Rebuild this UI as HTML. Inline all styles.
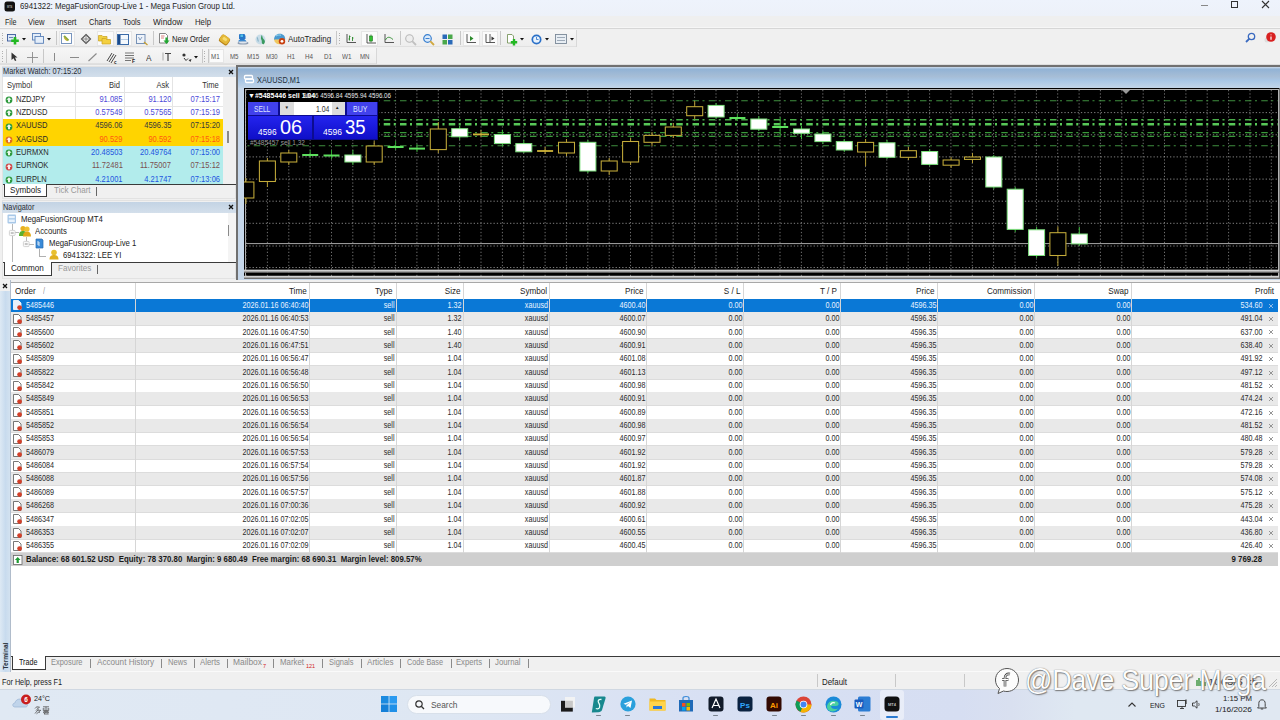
<!DOCTYPE html>
<html><head><meta charset="utf-8"><title>MT4</title><style>
*{margin:0;padding:0;box-sizing:border-box}
html,body{width:1280px;height:720px;overflow:hidden;background:#f0f0f0;font-family:"Liberation Sans",sans-serif;color:#222}
body{position:relative}
.a{position:absolute}
.t{position:absolute;white-space:nowrap;line-height:1}
svg{position:absolute;overflow:visible}
</style></head><body>
<div class="a" style="left:0px;top:0px;width:1280px;height:15.8px;background:linear-gradient(#eef3fc,#edf1f9)"></div>
<svg style="left:4px;top:0.5px;" width="12" height="11" viewBox="0 0 12 11"><rect x="0.5" y="0.5" width="10.5" height="10" rx="2.5" fill="#111"/><text x="5.7" y="6.8" font-size="2.6" fill="#aaa" text-anchor="middle" font-family="Liberation Sans" font-weight="bold">MT4</text></svg>
<div class="t" style="left:19.7px;top:0.9px;font-size:9.5px;color:#1f1f1f;transform:scaleX(0.826);transform-origin:0 0;">6941322: MegaFusionGroup-Live 1 - Mega Fusion Group Ltd.</div>
<div class="a" style="left:1200.8px;top:4.5px;width:7.4px;height:1.1px;background:#888"></div>
<div class="a" style="left:1231.4px;top:0.9px;width:7px;height:7px;border:1.1px solid #333"></div>
<svg style="left:1262px;top:1.2px;" width="7" height="7" viewBox="0 0 7 7"><path d="M0 0L7 7M7 0L0 7" stroke="#333" stroke-width="1.1"/></svg>
<div class="a" style="left:0px;top:15.8px;width:1280px;height:12.2px;background:#efefef"></div>
<div class="t" style="left:4.5px;top:17.5px;font-size:9px;color:#1f1f1f;transform:scaleX(0.793);transform-origin:0 0;">File</div>
<div class="t" style="left:28.2px;top:17.5px;font-size:9px;color:#1f1f1f;transform:scaleX(0.853);transform-origin:0 0;">View</div>
<div class="t" style="left:57.2px;top:17.5px;font-size:9px;color:#1f1f1f;transform:scaleX(0.866);transform-origin:0 0;">Insert</div>
<div class="t" style="left:88.7px;top:17.5px;font-size:9px;color:#1f1f1f;transform:scaleX(0.83);transform-origin:0 0;">Charts</div>
<div class="t" style="left:123.2px;top:17.5px;font-size:9px;color:#1f1f1f;transform:scaleX(0.833);transform-origin:0 0;">Tools</div>
<div class="t" style="left:153.2px;top:17.5px;font-size:9px;color:#1f1f1f;transform:scaleX(0.922);transform-origin:0 0;">Window</div>
<div class="t" style="left:194.7px;top:17.5px;font-size:9px;color:#1f1f1f;transform:scaleX(0.864);transform-origin:0 0;">Help</div>
<div class="a" style="left:0px;top:28px;width:1280px;height:37px;background:#f0f0f0"></div>
<div class="a" style="left:0px;top:26.6px;width:1280px;height:1px;background:#f6f6f6"></div>
<div class="a" style="left:0px;top:28.3px;width:1280px;height:1px;background:#d6d6d6"></div>
<div class="a" style="left:0px;top:29.5px;width:577px;height:17px;background:linear-gradient(#f6f6f6,#eeeeee);border-bottom:1px solid #e0e0e0"></div>
<div class="a" style="left:0px;top:47.5px;width:376px;height:16.5px;background:linear-gradient(#f6f6f6,#eeeeee);border-bottom:1px solid #e0e0e0"></div>
<div class="a" style="left:376px;top:47.5px;width:1px;height:16.5px;background:#d8d8d8"></div>
<div class="a" style="left:576px;top:29.5px;width:1px;height:17px;background:#d8d8d8"></div>
<div class="a" style="left:1.5px;top:32.5px;width:1.2px;height:1.2px;background:#b0b0b0"></div>
<div class="a" style="left:1.5px;top:35.1px;width:1.2px;height:1.2px;background:#b0b0b0"></div>
<div class="a" style="left:1.5px;top:37.7px;width:1.2px;height:1.2px;background:#b0b0b0"></div>
<div class="a" style="left:1.5px;top:40.3px;width:1.2px;height:1.2px;background:#b0b0b0"></div>
<div class="a" style="left:1.5px;top:42.9px;width:1.2px;height:1.2px;background:#b0b0b0"></div>
<div class="a" style="left:1.5px;top:50.5px;width:1.2px;height:1.2px;background:#b0b0b0"></div>
<div class="a" style="left:1.5px;top:53.1px;width:1.2px;height:1.2px;background:#b0b0b0"></div>
<div class="a" style="left:1.5px;top:55.7px;width:1.2px;height:1.2px;background:#b0b0b0"></div>
<div class="a" style="left:1.5px;top:58.3px;width:1.2px;height:1.2px;background:#b0b0b0"></div>
<div class="a" style="left:1.5px;top:60.9px;width:1.2px;height:1.2px;background:#b0b0b0"></div>
<svg style="left:7px;top:33.5px;" width="13" height="11" viewBox="0 0 13 11"><rect x="0.5" y="0.5" width="8" height="6.5" fill="#dde9f7" stroke="#3a5a9a" stroke-width="0.9"/><path d="M2 3.5H6" stroke="#3a5a9a" stroke-width="0.7"/><path d="M8 3V10.5M4.2 6.8H11.8" stroke="#22b822" stroke-width="2.6"/></svg>
<svg style="left:22px;top:38px;" width="4" height="3" viewBox="0 0 4 3"><path d="M0 0H4L2 2.5Z" fill="#111"/></svg>
<svg style="left:32px;top:33.3px;" width="12" height="11" viewBox="0 0 12 11"><rect x="0.5" y="0.5" width="8" height="6.5" fill="#e4eefa" stroke="#5a80b8" stroke-width="0.9"/><rect x="3" y="3.5" width="8.5" height="6.8" fill="#e4eefa" stroke="#5a80b8" stroke-width="0.9"/></svg>
<svg style="left:47px;top:38px;" width="4" height="3" viewBox="0 0 4 3"><path d="M0 0H4L2 2.5Z" fill="#111"/></svg>
<div class="a" style="left:55.5px;top:31px;width:1px;height:14px;background:#c8c8c8"></div>
<div class="a" style="left:58.5px;top:30.5px;width:16.5px;height:15.5px;background:#fbfbfb;border:1px solid #e6e6e6"></div>
<svg style="left:61px;top:33.3px;" width="11" height="11" viewBox="0 0 11 11"><rect x="0.5" y="0.5" width="10" height="10" fill="#fff" stroke="#6a8ab8" stroke-width="0.9"/><path d="M3 3L7.5 7.5" stroke="#8aa83a" stroke-width="2"/><path d="M3.5 5L6 7.5" stroke="#c8b030" stroke-width="1.5"/></svg>
<svg style="left:81px;top:33.5px;" width="10" height="10" viewBox="0 0 10 10"><path d="M5 0.5L9.5 5L5 9.5L0.5 5Z" fill="none" stroke="#555" stroke-width="1.2"/><path d="M5 1V9M1 5H9" stroke="#777" stroke-width="0.8"/></svg>
<div class="a" style="left:96.5px;top:30.5px;width:17.0px;height:15.5px;background:#fbfbfb;border:1px solid #e6e6e6"></div>
<svg style="left:98px;top:33.5px;" width="13" height="11" viewBox="0 0 13 11"><path d="M0.5 1.5H4L5 2.5H9V7H0.5Z" fill="#f0d040" stroke="#c8a020" stroke-width="0.7"/><path d="M4 4.5H7.5L8.5 5.5H12.5V10H4Z" fill="#f4d040" stroke="#c8a020" stroke-width="0.7"/></svg>
<div class="a" style="left:115.5px;top:30.5px;width:16.0px;height:15.5px;background:#fbfbfb;border:1px solid #e6e6e6"></div>
<svg style="left:117px;top:33.5px;" width="12" height="11" viewBox="0 0 12 11"><rect x="0.5" y="0.5" width="11" height="10" fill="#f4f8fc" stroke="#3a6aa8" stroke-width="1"/><rect x="1" y="1" width="2.5" height="9" fill="#1a4a8a"/><path d="M4 5.5H11" stroke="#9ab8d8" stroke-width="0.7"/></svg>
<svg style="left:136px;top:33.5px;" width="12" height="11" viewBox="0 0 12 11"><rect x="0.5" y="0.5" width="8.5" height="9" fill="#eef3fa" stroke="#6a88b0" stroke-width="0.9"/><path d="M2.5 3L4 6L6 3" stroke="#6a88b0" stroke-width="0.8" fill="none"/><path d="M8 8L11.5 11" stroke="#c8a030" stroke-width="1.3"/></svg>
<div class="a" style="left:153.3px;top:31px;width:1px;height:14px;background:#c8c8c8"></div>
<svg style="left:158.5px;top:33.3px;" width="13" height="12" viewBox="0 0 13 12"><path d="M0.5 0.5H6.5L8.5 2.5V10H0.5Z" fill="#fff" stroke="#666" stroke-width="0.8"/><path d="M2 3H5.5M2 5H5" stroke="#d06060" stroke-width="0.8"/><path d="M7.5 4.5V8" stroke="#20a830" stroke-width="2.2"/><path d="M4.5 7.5H10.5L7.5 11Z" fill="#20a830"/></svg>
<div class="t" style="left:172.1px;top:33.8px;font-size:9.5px;color:#1f1f1f;transform:scaleX(0.819);transform-origin:0 0;">New Order</div>
<svg style="left:217.5px;top:33.5px;" width="13" height="12" viewBox="0 0 13 12"><g transform="rotate(35 6.5 6)"><rect x="1.5" y="1.8" width="10" height="8.4" rx="2.2" fill="#b88418"/><rect x="1.8" y="1.8" width="9" height="7.2" rx="2" fill="#e4b838"/><rect x="4" y="3.5" width="4.5" height="3" rx="0.8" fill="#f6dc70"/></g></svg>
<svg style="left:236.5px;top:33.3px;" width="12" height="12" viewBox="0 0 12 12"><path d="M2.5 1H7.5L8.5 3V5.5L7 7.5H3.5L2 5.5V2Z" fill="#2a78c8"/><path d="M3.5 1.5H6V4H3.5Z" fill="#5ad0f0" opacity="0.8"/><path d="M2 7H8.5L9.5 8.5H1Z" fill="#3a88d0"/><ellipse cx="6" cy="10" rx="5.5" ry="1.6" fill="#8a9ab0"/><ellipse cx="6" cy="9.6" rx="4" ry="0.9" fill="#dfe6ee"/></svg>
<svg style="left:255px;top:33.5px;" width="11" height="11" viewBox="0 0 11 11"><circle cx="5.5" cy="5.5" r="5" fill="#c8dce8"/><path d="M6.5 1C8 2 7 4 8.5 5S10.5 8 9 10C7.5 10.8 6.5 9 6.8 7.5C7 6 5.5 5 6 3.5Z" fill="#3a9a60"/><path d="M2 3.5C3 4 2.5 6 3.5 7.5" stroke="#8ab4c8" stroke-width="1.2" fill="none"/></svg>
<svg style="left:273px;top:33px;" width="13" height="12" viewBox="0 0 13 12"><path d="M1 7C1 3 3.5 0.8 6.8 0.8S12.2 3 12.2 6.5Z" fill="#4a9ad0"/><path d="M3 3C4.5 2 6.5 1.8 8 2.2" stroke="#9ad8f0" stroke-width="1" fill="none"/><path d="M1 6.5C1.5 9.5 3.5 11.2 6.5 11.2C8 11.2 9 10.5 9.5 10L12.2 6.5Z" fill="#f0c860"/><circle cx="9" cy="8.3" r="3.2" fill="#c84010"/><circle cx="9" cy="8.3" r="1.4" fill="#fff"/></svg>
<div class="t" style="left:287.7px;top:33.8px;font-size:9.5px;color:#1f1f1f;transform:scaleX(0.841);transform-origin:0 0;">AutoTrading</div>
<div class="a" style="left:335.6px;top:31px;width:1px;height:14px;background:#c8c8c8"></div>
<div class="a" style="left:338.5px;top:32.5px;width:1.2px;height:1.2px;background:#b0b0b0"></div>
<div class="a" style="left:338.5px;top:35.1px;width:1.2px;height:1.2px;background:#b0b0b0"></div>
<div class="a" style="left:338.5px;top:37.7px;width:1.2px;height:1.2px;background:#b0b0b0"></div>
<div class="a" style="left:338.5px;top:40.3px;width:1.2px;height:1.2px;background:#b0b0b0"></div>
<div class="a" style="left:338.5px;top:42.9px;width:1.2px;height:1.2px;background:#b0b0b0"></div>
<svg style="left:346px;top:34px;" width="10" height="9" viewBox="0 0 10 9"><path d="M1 0V8.5H10" stroke="#444" stroke-width="0.9" fill="none"/><path d="M3.5 1.5V6.5M3 2.5H4.5M3.5 5H2.5M6.5 3V7M6 4H7.5" stroke="#2a8a2a" stroke-width="0.9"/></svg>
<div class="a" style="left:361.3px;top:30.5px;width:16.399999999999977px;height:15.5px;background:#fbfbfb;border:1px solid #e6e6e6"></div>
<svg style="left:365.5px;top:33.5px;" width="10" height="10" viewBox="0 0 10 10"><path d="M1 0V9H10" stroke="#444" stroke-width="0.9" fill="none"/><rect x="3.5" y="2" width="3" height="5" fill="#30c030" stroke="#207020" stroke-width="0.6"/><path d="M5 0.5V2M5 7V8.5" stroke="#207020" stroke-width="0.7"/></svg>
<svg style="left:383.5px;top:34px;" width="10" height="9" viewBox="0 0 10 9"><path d="M1 0V8.5H10" stroke="#444" stroke-width="0.9" fill="none"/><path d="M1.5 6C3 3 5 2 9 5.5" stroke="#2a8a2a" stroke-width="0.9" fill="none"/></svg>
<div class="a" style="left:399.6px;top:31px;width:1px;height:14px;background:#c8c8c8"></div>
<svg style="left:405px;top:33.5px;" width="12" height="12" viewBox="0 0 12 12"><circle cx="4.5" cy="4.5" r="3.8" fill="#eee" stroke="#b8b8b8" stroke-width="1.1"/><path d="M7.2 7.2L11 11" stroke="#c0c0c0" stroke-width="1.8"/></svg>
<svg style="left:423px;top:33.5px;" width="12" height="12" viewBox="0 0 12 12"><circle cx="4.5" cy="4.5" r="3.8" fill="#dbeafa" stroke="#3a80d0" stroke-width="1.2"/><path d="M2.5 4.5H6.5" stroke="#3a80d0" stroke-width="1"/><path d="M7.2 7.2L11 11" stroke="#d0a840" stroke-width="1.8"/></svg>
<svg style="left:442px;top:33.5px;" width="11" height="11" viewBox="0 0 11 11"><rect x="0.5" y="0.5" width="4.5" height="4.5" fill="#2a6ab8"/><rect x="6" y="0.5" width="4.5" height="4.5" fill="#4aa84a"/><rect x="0.5" y="6" width="4.5" height="4.5" fill="#4aa84a"/><rect x="6" y="6" width="4.5" height="4.5" fill="#2a6ab8"/></svg>
<div class="a" style="left:460px;top:31px;width:1px;height:14px;background:#c8c8c8"></div>
<div class="a" style="left:463px;top:30.5px;width:16.5px;height:15.5px;background:#fbfbfb;border:1px solid #e6e6e6"></div>
<svg style="left:466px;top:34px;" width="10" height="9" viewBox="0 0 10 9"><path d="M1 0V8.5H10" stroke="#444" stroke-width="0.9" fill="none"/><path d="M4 2V7L7.5 4.5Z" fill="#2a8a2a"/></svg>
<div class="a" style="left:482px;top:30.5px;width:15.5px;height:15.5px;background:#fbfbfb;border:1px solid #e6e6e6"></div>
<svg style="left:485px;top:34px;" width="10" height="9" viewBox="0 0 10 9"><path d="M1 0V8.5H10M5 0V8.5" stroke="#444" stroke-width="0.9" fill="none"/><path d="M6.5 2.5V6.5L9.5 4.5Z" fill="#333"/></svg>
<div class="a" style="left:500px;top:31px;width:1px;height:14px;background:#c8c8c8"></div>
<svg style="left:507px;top:33.5px;" width="11" height="12" viewBox="0 0 11 12"><path d="M0.5 0.5H5L6.5 2V9H0.5Z" fill="#fff" stroke="#6a8a4a" stroke-width="0.8"/><path d="M7 5V11.5M3.8 8.3H10.2" stroke="#22b822" stroke-width="2.4"/></svg>
<svg style="left:520px;top:38px;" width="4" height="3" viewBox="0 0 4 3"><path d="M0 0H4L2 2.5Z" fill="#111"/></svg>
<svg style="left:531px;top:33.5px;" width="11" height="11" viewBox="0 0 11 11"><circle cx="5.5" cy="5.5" r="5" fill="#2a70c8"/><circle cx="5.5" cy="5.5" r="3.3" fill="#e8f2fc"/><path d="M5.5 3V5.5H7.5" stroke="#2a70c8" stroke-width="0.8" fill="none"/></svg>
<svg style="left:545px;top:38px;" width="4" height="3" viewBox="0 0 4 3"><path d="M0 0H4L2 2.5Z" fill="#111"/></svg>
<svg style="left:555px;top:34px;" width="12" height="10" viewBox="0 0 12 10"><rect x="0.5" y="0.5" width="11" height="9" fill="#e8eef4" stroke="#7a8898" stroke-width="0.9"/><path d="M2 3.5H10M2 6.5H10" stroke="#8a98a8" stroke-width="0.8"/></svg>
<svg style="left:570px;top:38px;" width="4" height="3" viewBox="0 0 4 3"><path d="M0 0H4L2 2.5Z" fill="#111"/></svg>
<svg style="left:1245px;top:32px;" width="11" height="11" viewBox="0 0 11 11"><circle cx="6.5" cy="4.5" r="3.2" fill="none" stroke="#3a6ac0" stroke-width="1.3"/><path d="M4.2 6.8L1 10" stroke="#3a6ac0" stroke-width="1.8"/></svg>
<svg style="left:1263px;top:31px;" width="13" height="13" viewBox="0 0 13 13"><circle cx="4" cy="9" r="2.5" fill="#ddd"/><circle cx="8" cy="6" r="4.8" fill="#d82020"/><path d="M8 3.5V4.3M8 5.5V8.8" stroke="#fff" stroke-width="1.2"/></svg>
<div class="a" style="left:5.5px;top:49px;width:1px;height:14px;background:#c8c8c8"></div>
<svg style="left:10.5px;top:52.3px;" width="6" height="9" viewBox="0 0 6 9"><path d="M0.5 0.5V8L2.5 6.2L4 9L5.3 8.4L4 5.6H6.5Z" fill="#333"/></svg>
<svg style="left:26.5px;top:51.5px;" width="11" height="11" viewBox="0 0 11 11"><path d="M5.5 0V11M0 5.5H11" stroke="#8a8a8a" stroke-width="0.9"/></svg>
<div class="a" style="left:43.4px;top:49px;width:1px;height:14px;background:#c8c8c8"></div>
<div class="a" style="left:54.3px;top:52.8px;width:1.1px;height:8px;background:#8a8a8a"></div>
<div class="a" style="left:69.5px;top:56.5px;width:9.5px;height:1.1px;background:#8a8a8a"></div>
<svg style="left:88px;top:52.8px;" width="9" height="8.5" viewBox="0 0 9 8.5"><path d="M0.5 8L8.5 0.5" stroke="#8a8a8a" stroke-width="1.1"/></svg>
<svg style="left:105.5px;top:51.5px;" width="11" height="12" viewBox="0 0 11 12"><path d="M1 9L6 1M3 10L8 2M5 11L10 3" stroke="#333" stroke-width="0.9"/><text x="8" y="11.5" font-size="4.5" fill="#222" font-family="Liberation Sans" font-weight="bold">c</text></svg>
<svg style="left:123.5px;top:52px;" width="12" height="11" viewBox="0 0 12 11"><path d="M1 1H10M1 3.5H10M1 6H10M1 8.5H7" stroke="#555" stroke-width="0.8"/><text x="8" y="11" font-size="5" fill="#222" font-family="Liberation Sans" font-weight="bold">F</text></svg>
<div class="t" style="left:145.7px;top:53.5px;font-size:8.5px;color:#333;transform:scaleX(0.97);transform-origin:0 0;">A</div>
<svg style="left:162px;top:52px;" width="10" height="10" viewBox="0 0 10 10"><path d="M1 0.5V8.5" stroke="#aaa" stroke-width="1"/><path d="M3 1.5H9M6 1.5V9" stroke="#444" stroke-width="1.2"/></svg>
<svg style="left:181.5px;top:52.5px;" width="10" height="9" viewBox="0 0 10 9"><circle cx="2" cy="2" r="1.6" fill="#333"/><path d="M2 5L4 7.5L6 5.5" stroke="#333" stroke-width="1" fill="none"/><path d="M6.5 7L9.5 6L8.5 9Z" fill="#333"/></svg>
<svg style="left:194px;top:56px;" width="4" height="3" viewBox="0 0 4 3"><path d="M0 0H4L2 2.5Z" fill="#111"/></svg>
<div class="a" style="left:201.6px;top:49px;width:1px;height:14px;background:#c8c8c8"></div>
<div class="a" style="left:204px;top:50.5px;width:1.2px;height:1.2px;background:#b0b0b0"></div>
<div class="a" style="left:204px;top:53.1px;width:1.2px;height:1.2px;background:#b0b0b0"></div>
<div class="a" style="left:204px;top:55.7px;width:1.2px;height:1.2px;background:#b0b0b0"></div>
<div class="a" style="left:204px;top:58.3px;width:1.2px;height:1.2px;background:#b0b0b0"></div>
<div class="a" style="left:204px;top:60.9px;width:1.2px;height:1.2px;background:#b0b0b0"></div>
<div class="a" style="left:208.2px;top:49px;width:1px;height:14px;background:#c8c8c8"></div>
<div class="a" style="left:209.4px;top:48.8px;width:14.599999999999994px;height:14.700000000000003px;background:#fbfbfb;border:1px solid #e6e6e6"></div>
<div class="t" style="left:211.39999999999998px;top:53.2px;font-size:8px;color:#555;transform:scaleX(0.774);transform-origin:0 0;">M1</div>
<div class="t" style="left:230.2px;top:53.2px;font-size:8px;color:#555;transform:scaleX(0.765);transform-origin:0 0;">M5</div>
<div class="t" style="left:247.39999999999998px;top:53.2px;font-size:8px;color:#555;transform:scaleX(0.777);transform-origin:0 0;">M15</div>
<div class="t" style="left:266.2px;top:53.2px;font-size:8px;color:#555;transform:scaleX(0.739);transform-origin:0 0;">M30</div>
<div class="t" style="left:286.7px;top:53.2px;font-size:8px;color:#555;transform:scaleX(0.782);transform-origin:0 0;">H1</div>
<div class="t" style="left:304.7px;top:53.2px;font-size:8px;color:#555;transform:scaleX(0.782);transform-origin:0 0;">H4</div>
<div class="t" style="left:323.7px;top:53.2px;font-size:8px;color:#555;transform:scaleX(0.782);transform-origin:0 0;">D1</div>
<div class="t" style="left:342.2px;top:53.2px;font-size:8px;color:#555;transform:scaleX(0.792);transform-origin:0 0;">W1</div>
<div class="t" style="left:360.2px;top:53.2px;font-size:8px;color:#555;transform:scaleX(0.764);transform-origin:0 0;">MN</div>
<div class="a" style="left:0px;top:64px;width:1280px;height:1px;background:#dedede"></div>
<div class="a" style="left:0px;top:65px;width:237px;height:215px;background:#f0f0f0"></div>
<div class="a" style="left:236px;top:65px;width:1px;height:215px;background:#9a9a9a"></div>
<div class="a" style="left:1.5px;top:65.5px;width:234px;height:133px;background:#f0f0f0;border:1px solid #e2e2e2"></div>
<div class="a" style="left:2px;top:66.5px;width:234px;height:10px;background:linear-gradient(#c3d3e4,#d3dfeb)"></div>
<div class="t" style="left:3.3000000000000003px;top:67.4px;font-size:9px;color:#2a2e34;transform:scaleX(0.824);transform-origin:0 0;">Market Watch: 07:15:20</div>
<svg style="left:228.5px;top:69.5px;" width="4" height="4" viewBox="0 0 4 4"><path d="M0 0L4 4M4 0L0 4" stroke="#111" stroke-width="1.3"/></svg>
<div class="a" style="left:2.5px;top:76.5px;width:220.5px;height:107.5px;background:#fff"></div>
<div class="a" style="left:223px;top:76.5px;width:12.5px;height:107.5px;background:#f0f0f0"></div>
<div class="a" style="left:227.3px;top:131px;width:2px;height:11.5px;background:#8a8a8a"></div>
<div class="a" style="left:2.5px;top:92px;width:220.5px;height:0.8px;background:#e0e0e0"></div>
<div class="a" style="left:74.8px;top:76.5px;width:0.8px;height:107.5px;background:#e4e4e4"></div>
<div class="a" style="left:123.6px;top:76.5px;width:0.8px;height:107.5px;background:#e4e4e4"></div>
<div class="a" style="left:172.3px;top:76.5px;width:0.8px;height:107.5px;background:#e4e4e4"></div>
<div class="t" style="left:6.8px;top:80.8px;font-size:9px;color:#333;transform:scaleX(0.84);transform-origin:0 0;">Symbol</div>
<div class="t" style="right:1159.5px;top:80.8px;font-size:9px;color:#333;transform:scaleX(0.84);transform-origin:100% 0;">Bid</div>
<div class="t" style="right:1110.5px;top:80.8px;font-size:9px;color:#333;transform:scaleX(0.84);transform-origin:100% 0;">Ask</div>
<div class="t" style="right:1061.5px;top:80.8px;font-size:9px;color:#333;transform:scaleX(0.84);transform-origin:100% 0;">Time</div>
<div class="a" style="left:2.5px;top:105.5px;width:220.5px;height:0.7px;background:#e6e6e6"></div>
<svg style="left:5.2px;top:96.0px;" width="8" height="8" viewBox="0 0 8 8"><circle cx="4" cy="4" r="3.4" fill="#2e9a3e"/><path d="M4 1.2L6.6 3.8H5V6.3H3V3.8H1.4Z" fill="#fff" opacity="0.9"/></svg>
<div class="t" style="left:16px;top:94.8px;font-size:9px;color:#2a2a2a;transform:scaleX(0.84);transform-origin:0 0;">NZDJPY</div>
<div class="t" style="right:1157.6px;top:94.8px;font-size:9px;color:#4d4ad8;transform:scaleX(0.84);transform-origin:100% 0;">91.085</div>
<div class="t" style="right:1108.8px;top:94.8px;font-size:9px;color:#4d4ad8;transform:scaleX(0.84);transform-origin:100% 0;">91.120</div>
<div class="t" style="right:1059.5px;top:94.8px;font-size:9px;color:#4d4ad8;transform:scaleX(0.84);transform-origin:100% 0;">07:15:17</div>
<div class="a" style="left:2.5px;top:118.8px;width:220.5px;height:0.7px;background:#e6e6e6"></div>
<svg style="left:5.2px;top:109.3px;" width="8" height="8" viewBox="0 0 8 8"><circle cx="4" cy="4" r="3.4" fill="#2e9a3e"/><path d="M4 1.2L6.6 3.8H5V6.3H3V3.8H1.4Z" fill="#fff" opacity="0.9"/></svg>
<div class="t" style="left:16px;top:108.1px;font-size:9px;color:#2a2a2a;transform:scaleX(0.84);transform-origin:0 0;">NZDUSD</div>
<div class="t" style="right:1157.6px;top:108.1px;font-size:9px;color:#4d4ad8;transform:scaleX(0.84);transform-origin:100% 0;">0.57549</div>
<div class="t" style="right:1108.8px;top:108.1px;font-size:9px;color:#4d4ad8;transform:scaleX(0.84);transform-origin:100% 0;">0.57565</div>
<div class="t" style="right:1059.5px;top:108.1px;font-size:9px;color:#4d4ad8;transform:scaleX(0.84);transform-origin:100% 0;">07:15:19</div>
<div class="a" style="left:2.5px;top:119.4px;width:220.5px;height:13.3px;background:#ffd400"></div>
<svg style="left:5.2px;top:122.60000000000001px;" width="8" height="8" viewBox="0 0 8 8"><circle cx="4" cy="4" r="3.4" fill="#2e9a3e"/><path d="M4 1.2L6.6 3.8H5V6.3H3V3.8H1.4Z" fill="#fff" opacity="0.9"/></svg>
<div class="t" style="left:16px;top:121.4px;font-size:9px;color:#2a2a2a;transform:scaleX(0.84);transform-origin:0 0;">XAUUSD</div>
<div class="t" style="right:1157.6px;top:121.4px;font-size:9px;color:#3a3a3a;transform:scaleX(0.84);transform-origin:100% 0;">4596.06</div>
<div class="t" style="right:1108.8px;top:121.4px;font-size:9px;color:#3a3a3a;transform:scaleX(0.84);transform-origin:100% 0;">4596.35</div>
<div class="t" style="right:1059.5px;top:121.4px;font-size:9px;color:#3a3a3a;transform:scaleX(0.84);transform-origin:100% 0;">07:15:20</div>
<div class="a" style="left:2.5px;top:132.7px;width:220.5px;height:13.3px;background:#ffd400"></div>
<svg style="left:5.2px;top:135.89999999999998px;" width="8" height="8" viewBox="0 0 8 8"><circle cx="4" cy="4" r="3.4" fill="#e06a20"/><path d="M4 1.2L6.6 3.8H5V6.3H3V3.8H1.4Z" fill="#fff" opacity="0.9"/></svg>
<div class="t" style="left:16px;top:134.7px;font-size:9px;color:#2a2a2a;transform:scaleX(0.84);transform-origin:0 0;">XAGUSD</div>
<div class="t" style="right:1157.6px;top:134.7px;font-size:9px;color:#ff5a10;transform:scaleX(0.84);transform-origin:100% 0;">90.529</div>
<div class="t" style="right:1108.8px;top:134.7px;font-size:9px;color:#ff5a10;transform:scaleX(0.84);transform-origin:100% 0;">90.592</div>
<div class="t" style="right:1059.5px;top:134.7px;font-size:9px;color:#ff5a10;transform:scaleX(0.84);transform-origin:100% 0;">07:15:18</div>
<div class="a" style="left:2.5px;top:146.0px;width:220.5px;height:13.3px;background:#b2ecec"></div>
<svg style="left:5.2px;top:149.2px;" width="8" height="8" viewBox="0 0 8 8"><circle cx="4" cy="4" r="3.4" fill="#2e9a3e"/><path d="M4 1.2L6.6 3.8H5V6.3H3V3.8H1.4Z" fill="#fff" opacity="0.9"/></svg>
<div class="t" style="left:16px;top:148.0px;font-size:9px;color:#2a2a2a;transform:scaleX(0.84);transform-origin:0 0;">EURMXN</div>
<div class="t" style="right:1157.6px;top:148.0px;font-size:9px;color:#1f55e0;transform:scaleX(0.84);transform-origin:100% 0;">20.48503</div>
<div class="t" style="right:1108.8px;top:148.0px;font-size:9px;color:#1f55e0;transform:scaleX(0.84);transform-origin:100% 0;">20.49764</div>
<div class="t" style="right:1059.5px;top:148.0px;font-size:9px;color:#1f55e0;transform:scaleX(0.84);transform-origin:100% 0;">07:15:00</div>
<div class="a" style="left:2.5px;top:159.3px;width:220.5px;height:13.3px;background:#b2ecec"></div>
<svg style="left:5.2px;top:162.5px;" width="8" height="8" viewBox="0 0 8 8"><circle cx="4" cy="4" r="3.4" fill="#d04848"/><path d="M4 1.2L6.6 3.8H5V6.3H3V3.8H1.4Z" fill="#fff" opacity="0.9"/></svg>
<div class="t" style="left:16px;top:161.3px;font-size:9px;color:#2a2a2a;transform:scaleX(0.84);transform-origin:0 0;">EURNOK</div>
<div class="t" style="right:1157.6px;top:161.3px;font-size:9px;color:#7a5050;transform:scaleX(0.84);transform-origin:100% 0;">11.72481</div>
<div class="t" style="right:1108.8px;top:161.3px;font-size:9px;color:#7a5050;transform:scaleX(0.84);transform-origin:100% 0;">11.75007</div>
<div class="t" style="right:1059.5px;top:161.3px;font-size:9px;color:#7a5050;transform:scaleX(0.84);transform-origin:100% 0;">07:15:12</div>
<div class="a" style="left:2.5px;top:172.60000000000002px;width:220.5px;height:11.399999999999977px;background:#b2ecec"></div>
<svg style="left:5.2px;top:175.8px;" width="8" height="8" viewBox="0 0 8 8"><circle cx="4" cy="4" r="3.4" fill="#2e9a3e"/><path d="M4 1.2L6.6 3.8H5V6.3H3V3.8H1.4Z" fill="#fff" opacity="0.9"/></svg>
<div class="t" style="left:16px;top:174.60000000000002px;font-size:9px;color:#2a2a2a;transform:scaleX(0.84);transform-origin:0 0;">EURPLN</div>
<div class="t" style="right:1157.6px;top:174.60000000000002px;font-size:9px;color:#1f55e0;transform:scaleX(0.84);transform-origin:100% 0;">4.21001</div>
<div class="t" style="right:1108.8px;top:174.60000000000002px;font-size:9px;color:#1f55e0;transform:scaleX(0.84);transform-origin:100% 0;">4.21747</div>
<div class="t" style="right:1059.5px;top:174.60000000000002px;font-size:9px;color:#1f55e0;transform:scaleX(0.84);transform-origin:100% 0;">07:13:06</div>
<div class="a" style="left:2.5px;top:184px;width:220.5px;height:0.9px;background:#3a3a3a"></div>
<div class="a" style="left:223px;top:184px;width:12.5px;height:0.9px;background:#3a3a3a"></div>
<div class="a" style="left:4px;top:184px;width:42.5px;height:13px;background:#fff;border:1px solid #3a3a3a;border-top:none"></div>
<div class="t" style="left:10px;top:186.3px;font-size:9px;color:#222;transform:scaleX(0.9);transform-origin:0 0;">Symbols</div>
<div class="t" style="left:54px;top:186.3px;font-size:9px;color:#999;transform:scaleX(0.9);transform-origin:0 0;">Tick Chart</div>
<div class="a" style="left:96px;top:187px;width:0.9px;height:9px;background:#666"></div>
<div class="a" style="left:1.5px;top:200px;width:234px;height:79px;background:#f0f0f0;border:1px solid #e2e2e2"></div>
<div class="a" style="left:2px;top:202px;width:234px;height:10.5px;background:linear-gradient(#c3d3e4,#d3dfeb)"></div>
<div class="t" style="left:3.3000000000000003px;top:203.2px;font-size:9px;color:#2a2e34;transform:scaleX(0.815);transform-origin:0 0;">Navigator</div>
<svg style="left:228.5px;top:205px;" width="4" height="4" viewBox="0 0 4 4"><path d="M0 0L4 4M4 0L0 4" stroke="#111" stroke-width="1.3"/></svg>
<div class="a" style="left:2.5px;top:212.5px;width:225px;height:49.5px;background:#fff"></div>
<div class="a" style="left:228px;top:212.5px;width:7.5px;height:49.5px;background:#f4f4f4"></div>
<div class="a" style="left:227.5px;top:225px;width:1.8px;height:11px;background:#8a8a8a"></div>
<div class="a" style="left:11.5px;top:224px;width:0.8px;height:5.5px;background:#b8b8b8"></div>
<div class="a" style="left:11.5px;top:235.5px;width:0.8px;height:27px;background:#b8b8b8"></div>
<div class="a" style="left:15px;top:232px;width:3.5px;height:0.8px;background:#b8b8b8"></div>
<div class="a" style="left:25.6px;top:236.5px;width:0.8px;height:4.8px;background:#b8b8b8"></div>
<div class="a" style="left:29.3px;top:244.3px;width:5px;height:0.8px;background:#b8b8b8"></div>
<div class="a" style="left:39px;top:249px;width:0.8px;height:7px;background:#b0b0b0"></div>
<div class="a" style="left:39px;top:255.5px;width:7px;height:0.8px;background:#b0b0b0"></div>
<svg style="left:8.5px;top:229.5px;" width="6.5" height="6" viewBox="0 0 6.5 6"><rect x="0.4" y="0.4" width="5.7" height="5.2" rx="1" fill="#fafafa" stroke="#c8c8c8" stroke-width="0.8"/><path d="M1.8 3H4.7" stroke="#777" stroke-width="0.8"/></svg>
<svg style="left:22.8px;top:241.3px;" width="6.5" height="6" viewBox="0 0 6.5 6"><rect x="0.4" y="0.4" width="5.7" height="5.2" rx="1" fill="#fafafa" stroke="#c8c8c8" stroke-width="0.8"/><path d="M1.8 3H4.7" stroke="#777" stroke-width="0.8"/></svg>
<svg style="left:7px;top:214.2px;" width="9.5" height="10" viewBox="0 0 9.5 10"><rect x="0.5" y="0.5" width="8.5" height="9" rx="1" fill="#a8c8e8"/><rect x="1.8" y="2" width="6" height="2.2" fill="#e8f2fc"/><rect x="1.8" y="5.5" width="6" height="2.5" fill="#e8f2fc"/></svg>
<svg style="left:19px;top:225px;" width="12" height="12" viewBox="0 0 12 12"><circle cx="4" cy="3.5" r="2.6" fill="#e8b020"/><path d="M0 11C0 7 1.5 6 4 6S8 7 8 11Z" fill="#5cb030"/><circle cx="8" cy="4" r="2.6" fill="#f0c030"/><path d="M4 11.5C4 8 5.5 6.5 8 6.5S12 8 12 11.5Z" fill="#e0a818"/></svg>
<svg style="left:35px;top:238px;" width="9" height="11" viewBox="0 0 9 11"><path d="M1 1H7L8 2V10H1Z" fill="#3a8ad8" stroke="#2a6ab0" stroke-width="0.7"/><path d="M3 3V7H5M3 5H5" stroke="#fff" stroke-width="0.8" fill="none"/></svg>
<svg style="left:49px;top:249px;" width="10" height="11" viewBox="0 0 10 11"><circle cx="5" cy="3.5" r="2.8" fill="#e8c030"/><path d="M0.5 10.5C0.5 7 2.5 6 5 6S9.5 7 9.5 10.5Z" fill="#e0b020"/></svg>
<div class="t" style="left:20.6px;top:215.3px;font-size:9px;color:#222;transform:scaleX(0.86);transform-origin:0 0;">MegaFusionGroup MT4</div>
<div class="t" style="left:35px;top:226.5px;font-size:9px;color:#222;transform:scaleX(0.86);transform-origin:0 0;">Accounts</div>
<div class="t" style="left:49px;top:239.3px;font-size:9px;color:#222;transform:scaleX(0.86);transform-origin:0 0;">MegaFusionGroup-Live 1</div>
<div class="t" style="left:62.5px;top:251.3px;font-size:9px;color:#222;transform:scaleX(0.86);transform-origin:0 0;">6941322: LEE YI</div>
<div class="a" style="left:2.5px;top:262px;width:233px;height:0.9px;background:#3a3a3a"></div>
<div class="a" style="left:4px;top:262px;width:47.5px;height:14px;background:#fff;border:1px solid #3a3a3a;border-top:none"></div>
<div class="t" style="left:10.5px;top:264.3px;font-size:9px;color:#222;transform:scaleX(0.9);transform-origin:0 0;">Common</div>
<div class="t" style="left:58px;top:264.3px;font-size:9px;color:#999;transform:scaleX(0.9);transform-origin:0 0;">Favorites</div>
<div class="a" style="left:96.5px;top:265px;width:0.9px;height:9px;background:#666"></div>
<div class="a" style="left:236px;top:65px;width:1044px;height:215px;background:#707070"></div>
<div class="a" style="left:237.5px;top:66.5px;width:1042.5px;height:1px;background:#dfe8f2"></div>
<div class="a" style="left:238px;top:67px;width:1042px;height:21px;background:linear-gradient(#cddcec 0%,#92b3d5 10%,#a6bdd6 45%,#a8c7e6 65%,#c2d5e8 100%)"></div>
<div class="a" style="left:238px;top:88px;width:6px;height:191px;background:#c6d7ea"></div>
<div class="a" style="left:238px;top:279px;width:1042px;height:1px;background:#c6d7ea"></div>
<svg style="left:244px;top:74px;" width="10" height="10" viewBox="0 0 10 10"><rect x="0.5" y="1.5" width="8" height="3.5" rx="1" fill="none" stroke="#fff" stroke-width="1.3"/><rect x="1.5" y="5" width="8" height="3.5" rx="1" fill="none" stroke="#fff" stroke-width="1.3"/></svg>
<div class="t" style="left:256.7px;top:74.6px;font-size:9.5px;color:#26303a;transform:scaleX(0.776);transform-origin:0 0;">XAUUSD,M1</div>
<svg style="left:244px;top:88px;overflow:hidden" width="1035" height="191" viewBox="0 0 1035 191"><rect x="0" y="0" width="1035" height="191" fill="#000"/><rect x="1.5" y="1.5" width="1033" height="188" fill="none" stroke="#b4b4b4" stroke-width="1"/><line x1="2.0" y1="2" x2="2.0" y2="189" stroke="#8c8c8c" stroke-width="0.8" stroke-dasharray="1.3 2"/><line x1="23.4" y1="2" x2="23.4" y2="189" stroke="#8c8c8c" stroke-width="0.8" stroke-dasharray="1.3 2"/><line x1="44.8" y1="2" x2="44.8" y2="189" stroke="#8c8c8c" stroke-width="0.8" stroke-dasharray="1.3 2"/><line x1="66.1" y1="2" x2="66.1" y2="189" stroke="#8c8c8c" stroke-width="0.8" stroke-dasharray="1.3 2"/><line x1="87.5" y1="2" x2="87.5" y2="189" stroke="#8c8c8c" stroke-width="0.8" stroke-dasharray="1.3 2"/><line x1="108.8" y1="2" x2="108.8" y2="189" stroke="#8c8c8c" stroke-width="0.8" stroke-dasharray="1.3 2"/><line x1="130.2" y1="2" x2="130.2" y2="189" stroke="#8c8c8c" stroke-width="0.8" stroke-dasharray="1.3 2"/><line x1="151.6" y1="2" x2="151.6" y2="189" stroke="#8c8c8c" stroke-width="0.8" stroke-dasharray="1.3 2"/><line x1="172.9" y1="2" x2="172.9" y2="189" stroke="#8c8c8c" stroke-width="0.8" stroke-dasharray="1.3 2"/><line x1="194.3" y1="2" x2="194.3" y2="189" stroke="#8c8c8c" stroke-width="0.8" stroke-dasharray="1.3 2"/><line x1="215.6" y1="2" x2="215.6" y2="189" stroke="#8c8c8c" stroke-width="0.8" stroke-dasharray="1.3 2"/><line x1="237.0" y1="2" x2="237.0" y2="189" stroke="#8c8c8c" stroke-width="0.8" stroke-dasharray="1.3 2"/><line x1="258.4" y1="2" x2="258.4" y2="189" stroke="#8c8c8c" stroke-width="0.8" stroke-dasharray="1.3 2"/><line x1="279.7" y1="2" x2="279.7" y2="189" stroke="#8c8c8c" stroke-width="0.8" stroke-dasharray="1.3 2"/><line x1="301.1" y1="2" x2="301.1" y2="189" stroke="#8c8c8c" stroke-width="0.8" stroke-dasharray="1.3 2"/><line x1="322.4" y1="2" x2="322.4" y2="189" stroke="#8c8c8c" stroke-width="0.8" stroke-dasharray="1.3 2"/><line x1="343.8" y1="2" x2="343.8" y2="189" stroke="#8c8c8c" stroke-width="0.8" stroke-dasharray="1.3 2"/><line x1="365.2" y1="2" x2="365.2" y2="189" stroke="#8c8c8c" stroke-width="0.8" stroke-dasharray="1.3 2"/><line x1="386.5" y1="2" x2="386.5" y2="189" stroke="#8c8c8c" stroke-width="0.8" stroke-dasharray="1.3 2"/><line x1="407.9" y1="2" x2="407.9" y2="189" stroke="#8c8c8c" stroke-width="0.8" stroke-dasharray="1.3 2"/><line x1="429.2" y1="2" x2="429.2" y2="189" stroke="#8c8c8c" stroke-width="0.8" stroke-dasharray="1.3 2"/><line x1="450.6" y1="2" x2="450.6" y2="189" stroke="#8c8c8c" stroke-width="0.8" stroke-dasharray="1.3 2"/><line x1="472.0" y1="2" x2="472.0" y2="189" stroke="#8c8c8c" stroke-width="0.8" stroke-dasharray="1.3 2"/><line x1="493.3" y1="2" x2="493.3" y2="189" stroke="#8c8c8c" stroke-width="0.8" stroke-dasharray="1.3 2"/><line x1="514.7" y1="2" x2="514.7" y2="189" stroke="#8c8c8c" stroke-width="0.8" stroke-dasharray="1.3 2"/><line x1="536.0" y1="2" x2="536.0" y2="189" stroke="#8c8c8c" stroke-width="0.8" stroke-dasharray="1.3 2"/><line x1="557.4" y1="2" x2="557.4" y2="189" stroke="#8c8c8c" stroke-width="0.8" stroke-dasharray="1.3 2"/><line x1="578.8" y1="2" x2="578.8" y2="189" stroke="#8c8c8c" stroke-width="0.8" stroke-dasharray="1.3 2"/><line x1="600.1" y1="2" x2="600.1" y2="189" stroke="#8c8c8c" stroke-width="0.8" stroke-dasharray="1.3 2"/><line x1="621.5" y1="2" x2="621.5" y2="189" stroke="#8c8c8c" stroke-width="0.8" stroke-dasharray="1.3 2"/><line x1="642.8" y1="2" x2="642.8" y2="189" stroke="#8c8c8c" stroke-width="0.8" stroke-dasharray="1.3 2"/><line x1="664.2" y1="2" x2="664.2" y2="189" stroke="#8c8c8c" stroke-width="0.8" stroke-dasharray="1.3 2"/><line x1="685.6" y1="2" x2="685.6" y2="189" stroke="#8c8c8c" stroke-width="0.8" stroke-dasharray="1.3 2"/><line x1="706.9" y1="2" x2="706.9" y2="189" stroke="#8c8c8c" stroke-width="0.8" stroke-dasharray="1.3 2"/><line x1="728.3" y1="2" x2="728.3" y2="189" stroke="#8c8c8c" stroke-width="0.8" stroke-dasharray="1.3 2"/><line x1="749.6" y1="2" x2="749.6" y2="189" stroke="#8c8c8c" stroke-width="0.8" stroke-dasharray="1.3 2"/><line x1="771.0" y1="2" x2="771.0" y2="189" stroke="#8c8c8c" stroke-width="0.8" stroke-dasharray="1.3 2"/><line x1="792.4" y1="2" x2="792.4" y2="189" stroke="#8c8c8c" stroke-width="0.8" stroke-dasharray="1.3 2"/><line x1="813.7" y1="2" x2="813.7" y2="189" stroke="#8c8c8c" stroke-width="0.8" stroke-dasharray="1.3 2"/><line x1="835.1" y1="2" x2="835.1" y2="189" stroke="#8c8c8c" stroke-width="0.8" stroke-dasharray="1.3 2"/><line x1="856.4" y1="2" x2="856.4" y2="189" stroke="#8c8c8c" stroke-width="0.8" stroke-dasharray="1.3 2"/><line x1="877.8" y1="2" x2="877.8" y2="189" stroke="#8c8c8c" stroke-width="0.8" stroke-dasharray="1.3 2"/><line x1="899.2" y1="2" x2="899.2" y2="189" stroke="#8c8c8c" stroke-width="0.8" stroke-dasharray="1.3 2"/><line x1="920.5" y1="2" x2="920.5" y2="189" stroke="#8c8c8c" stroke-width="0.8" stroke-dasharray="1.3 2"/><line x1="941.9" y1="2" x2="941.9" y2="189" stroke="#8c8c8c" stroke-width="0.8" stroke-dasharray="1.3 2"/><line x1="963.2" y1="2" x2="963.2" y2="189" stroke="#8c8c8c" stroke-width="0.8" stroke-dasharray="1.3 2"/><line x1="984.6" y1="2" x2="984.6" y2="189" stroke="#8c8c8c" stroke-width="0.8" stroke-dasharray="1.3 2"/><line x1="1006.0" y1="2" x2="1006.0" y2="189" stroke="#8c8c8c" stroke-width="0.8" stroke-dasharray="1.3 2"/><line x1="1027.3" y1="2" x2="1027.3" y2="189" stroke="#8c8c8c" stroke-width="0.8" stroke-dasharray="1.3 2"/><line x1="2" y1="24.6" x2="1034" y2="24.6" stroke="#a0a0a0" stroke-width="0.8" stroke-dasharray="1.3 2"/><line x1="2" y1="46.8" x2="1034" y2="46.8" stroke="#a0a0a0" stroke-width="0.8" stroke-dasharray="1.3 2"/><line x1="2" y1="68.9" x2="1034" y2="68.9" stroke="#a0a0a0" stroke-width="0.8" stroke-dasharray="1.3 2"/><line x1="2" y1="91.1" x2="1034" y2="91.1" stroke="#a0a0a0" stroke-width="0.8" stroke-dasharray="1.3 2"/><line x1="2" y1="113.2" x2="1034" y2="113.2" stroke="#a0a0a0" stroke-width="0.8" stroke-dasharray="1.3 2"/><line x1="2" y1="135.3" x2="1034" y2="135.3" stroke="#a0a0a0" stroke-width="0.8" stroke-dasharray="1.3 2"/><line x1="2" y1="158.0" x2="1034" y2="158.0" stroke="#a0a0a0" stroke-width="0.8" stroke-dasharray="1.3 2"/><line x1="2" y1="179.5" x2="1034" y2="179.5" stroke="#a0a0a0" stroke-width="0.8" stroke-dasharray="1.3 2"/><defs><linearGradient id="bg1" x1="0" y1="0" x2="0" y2="1"><stop offset="0" stop-color="#f0f0f0"/><stop offset="1" stop-color="#6a6a6a"/></linearGradient></defs><rect x="0" y="181.7" width="1035" height="3.1" fill="url(#bg1)"/><line x1="2" y1="155.6" x2="1034" y2="155.6" stroke="#a8a8a8" stroke-width="1"/><rect x="0" y="187.8" width="1035" height="3.1" fill="url(#bg1)"/><line x1="2" y1="12.75" x2="1034" y2="12.75" stroke="#3f8f3f" stroke-width="1.2" stroke-dasharray="6.5 3.5 2 4.25" stroke-dashoffset="8.5"/><line x1="2" y1="31.75" x2="1034" y2="31.75" stroke="#4aae4a" stroke-width="1.5" stroke-dasharray="6.5 3.5 2 4.25" stroke-dashoffset="8.5"/><line x1="2" y1="36.25" x2="1034" y2="36.25" stroke="#58c858" stroke-width="2.6" stroke-dasharray="6.5 3.5 2 4.25" stroke-dashoffset="8.5"/><line x1="2" y1="44.60" x2="1034" y2="44.60" stroke="#3a9a3a" stroke-width="1.4" stroke-dasharray="6.5 3.5 2 4.25" stroke-dashoffset="8.5"/><line x1="2" y1="48.40" x2="1034" y2="48.40" stroke="#3a9a3a" stroke-width="1.4" stroke-dasharray="6.5 3.5 2 4.25" stroke-dashoffset="8.5"/><line x1="2" y1="57.75" x2="1034" y2="57.75" stroke="#3f8f3f" stroke-width="1.2" stroke-dasharray="6.5 3.5 2 4.25" stroke-dashoffset="8.5"/><line x1="1.9" y1="90.0" x2="1.9" y2="116.0" stroke="#b49c34" stroke-width="1"/><rect x="-6.1" y="94.0" width="16" height="16.0" fill="#000" stroke="#c4ac3a" stroke-width="1.05"/><line x1="23.4" y1="70.0" x2="23.4" y2="99.0" stroke="#b49c34" stroke-width="1"/><rect x="15.4" y="73.0" width="16" height="20.5" fill="#000" stroke="#c4ac3a" stroke-width="1.05"/><line x1="44.8" y1="62.0" x2="44.8" y2="77.0" stroke="#b49c34" stroke-width="1"/><rect x="36.8" y="65.0" width="16" height="9.0" fill="#000" stroke="#c4ac3a" stroke-width="1.05"/><line x1="66.2" y1="62.0" x2="66.2" y2="70.0" stroke="#2ea02e" stroke-width="1"/><line x1="58.2" y1="67.0" x2="74.2" y2="67.0" stroke="#5ee05e" stroke-width="2"/><line x1="87.5" y1="62.0" x2="87.5" y2="71.0" stroke="#2ea02e" stroke-width="1"/><line x1="79.5" y1="67.5" x2="95.5" y2="67.5" stroke="#5ee05e" stroke-width="2"/><line x1="108.9" y1="62.0" x2="108.9" y2="77.0" stroke="#3cb83c" stroke-width="1"/><rect x="100.9" y="67.0" width="16" height="7.0" fill="#fff" stroke="#7ee07e" stroke-width="1"/><line x1="130.2" y1="53.0" x2="130.2" y2="77.0" stroke="#b49c34" stroke-width="1"/><rect x="122.2" y="58.0" width="16" height="16.0" fill="#000" stroke="#c4ac3a" stroke-width="1.05"/><line x1="151.6" y1="53.0" x2="151.6" y2="62.0" stroke="#2ea02e" stroke-width="1"/><line x1="143.6" y1="59.0" x2="159.6" y2="59.0" stroke="#5ee05e" stroke-width="2"/><line x1="173.0" y1="56.0" x2="173.0" y2="64.0" stroke="#2ea02e" stroke-width="1"/><line x1="165.0" y1="60.6" x2="181.0" y2="60.6" stroke="#5ee05e" stroke-width="2"/><line x1="194.3" y1="34.0" x2="194.3" y2="65.0" stroke="#b49c34" stroke-width="1"/><rect x="186.3" y="41.0" width="16" height="20.6" fill="#000" stroke="#c4ac3a" stroke-width="1.05"/><line x1="215.7" y1="38.0" x2="215.7" y2="52.0" stroke="#3cb83c" stroke-width="1"/><rect x="207.7" y="40.7" width="16" height="8.1" fill="#fff" stroke="#7ee07e" stroke-width="1"/><line x1="237.0" y1="42.0" x2="237.0" y2="49.0" stroke="#b49c34" stroke-width="1"/><line x1="229.0" y1="46.4" x2="245.0" y2="46.4" stroke="#d0b438" stroke-width="1.8"/><line x1="258.4" y1="42.0" x2="258.4" y2="58.0" stroke="#3cb83c" stroke-width="1"/><rect x="250.4" y="46.5" width="16" height="9.1" fill="#fff" stroke="#7ee07e" stroke-width="1"/><line x1="279.8" y1="52.0" x2="279.8" y2="65.0" stroke="#3cb83c" stroke-width="1"/><rect x="271.8" y="55.6" width="16" height="8.2" fill="#fff" stroke="#7ee07e" stroke-width="1"/><line x1="301.1" y1="59.0" x2="301.1" y2="66.0" stroke="#b49c34" stroke-width="1"/><line x1="293.1" y1="63.0" x2="309.1" y2="63.0" stroke="#d0b438" stroke-width="1.8"/><line x1="322.5" y1="51.0" x2="322.5" y2="68.0" stroke="#b49c34" stroke-width="1"/><rect x="314.5" y="54.3" width="16" height="10.7" fill="#000" stroke="#c4ac3a" stroke-width="1.05"/><line x1="343.9" y1="52.0" x2="343.9" y2="85.0" stroke="#3cb83c" stroke-width="1"/><rect x="335.9" y="54.3" width="16" height="28.7" fill="#fff" stroke="#7ee07e" stroke-width="1"/><line x1="365.2" y1="70.0" x2="365.2" y2="87.0" stroke="#b49c34" stroke-width="1"/><rect x="357.2" y="73.0" width="16" height="10.0" fill="#000" stroke="#c4ac3a" stroke-width="1.05"/><line x1="386.6" y1="50.0" x2="386.6" y2="77.0" stroke="#b49c34" stroke-width="1"/><rect x="378.6" y="53.5" width="16" height="20.5" fill="#000" stroke="#c4ac3a" stroke-width="1.05"/><line x1="408.0" y1="44.0" x2="408.0" y2="58.0" stroke="#b49c34" stroke-width="1"/><rect x="400.0" y="47.4" width="16" height="6.9" fill="#000" stroke="#c4ac3a" stroke-width="1.05"/><line x1="429.3" y1="35.0" x2="429.3" y2="50.0" stroke="#b49c34" stroke-width="1"/><rect x="421.3" y="39.0" width="16" height="8.4" fill="#000" stroke="#c4ac3a" stroke-width="1.05"/><line x1="450.7" y1="13.0" x2="450.7" y2="31.0" stroke="#b49c34" stroke-width="1"/><rect x="442.7" y="18.7" width="16" height="9.0" fill="#000" stroke="#c4ac3a" stroke-width="1.05"/><line x1="472.1" y1="15.0" x2="472.1" y2="31.0" stroke="#3cb83c" stroke-width="1"/><rect x="464.1" y="17.4" width="16" height="11.6" fill="#fff" stroke="#7ee07e" stroke-width="1"/><line x1="493.4" y1="26.0" x2="493.4" y2="33.0" stroke="#2ea02e" stroke-width="1"/><line x1="485.4" y1="30.0" x2="501.4" y2="30.0" stroke="#5ee05e" stroke-width="2"/><line x1="514.8" y1="28.0" x2="514.8" y2="43.0" stroke="#3cb83c" stroke-width="1"/><rect x="506.8" y="31.0" width="16" height="10.2" fill="#fff" stroke="#7ee07e" stroke-width="1"/><line x1="536.2" y1="29.0" x2="536.2" y2="49.0" stroke="#2ea02e" stroke-width="1"/><line x1="528.2" y1="39.0" x2="544.2" y2="39.0" stroke="#5ee05e" stroke-width="2"/><line x1="557.5" y1="38.0" x2="557.5" y2="51.0" stroke="#3cb83c" stroke-width="1"/><rect x="549.5" y="41.0" width="16" height="4.3" fill="#fff" stroke="#7ee07e" stroke-width="1"/><line x1="578.9" y1="43.0" x2="578.9" y2="56.0" stroke="#3cb83c" stroke-width="1"/><rect x="570.9" y="46.0" width="16" height="7.6" fill="#fff" stroke="#7ee07e" stroke-width="1"/><line x1="600.3" y1="51.0" x2="600.3" y2="64.0" stroke="#3cb83c" stroke-width="1"/><rect x="592.3" y="53.6" width="16" height="8.4" fill="#fff" stroke="#7ee07e" stroke-width="1"/><line x1="621.6" y1="51.0" x2="621.6" y2="78.0" stroke="#b49c34" stroke-width="1"/><rect x="613.6" y="54.4" width="16" height="9.6" fill="#000" stroke="#c4ac3a" stroke-width="1.05"/><line x1="643.0" y1="52.0" x2="643.0" y2="71.0" stroke="#3cb83c" stroke-width="1"/><rect x="635.0" y="54.8" width="16" height="14.5" fill="#fff" stroke="#7ee07e" stroke-width="1"/><line x1="664.4" y1="59.0" x2="664.4" y2="72.0" stroke="#b49c34" stroke-width="1"/><rect x="656.4" y="62.7" width="16" height="6.6" fill="#000" stroke="#c4ac3a" stroke-width="1.05"/><line x1="685.7" y1="61.0" x2="685.7" y2="78.0" stroke="#3cb83c" stroke-width="1"/><rect x="677.7" y="63.5" width="16" height="12.9" fill="#fff" stroke="#7ee07e" stroke-width="1"/><line x1="707.1" y1="69.0" x2="707.1" y2="80.0" stroke="#b49c34" stroke-width="1"/><rect x="699.1" y="72.0" width="16" height="5.2" fill="#000" stroke="#c4ac3a" stroke-width="1.05"/><line x1="728.5" y1="65.0" x2="728.5" y2="75.0" stroke="#b49c34" stroke-width="1"/><rect x="720.5" y="69.0" width="16" height="2.4" fill="#000" stroke="#c4ac3a" stroke-width="1.05"/><line x1="749.8" y1="67.0" x2="749.8" y2="101.0" stroke="#3cb83c" stroke-width="1"/><rect x="741.8" y="69.0" width="16" height="30.0" fill="#fff" stroke="#7ee07e" stroke-width="1"/><line x1="771.2" y1="99.0" x2="771.2" y2="144.0" stroke="#3cb83c" stroke-width="1"/><rect x="763.2" y="101.2" width="16" height="40.2" fill="#fff" stroke="#7ee07e" stroke-width="1"/><line x1="792.6" y1="139.0" x2="792.6" y2="170.0" stroke="#3cb83c" stroke-width="1"/><rect x="784.6" y="141.8" width="16" height="25.7" fill="#fff" stroke="#7ee07e" stroke-width="1"/><line x1="813.9" y1="138.5" x2="813.9" y2="177.8" stroke="#b49c34" stroke-width="1"/><rect x="805.9" y="144.7" width="16" height="22.8" fill="#000" stroke="#c4ac3a" stroke-width="1.05"/><line x1="835.3" y1="139.0" x2="835.3" y2="158.0" stroke="#3cb83c" stroke-width="1"/><rect x="827.3" y="146.0" width="16" height="9.9" fill="#fff" stroke="#7ee07e" stroke-width="1"/><path d="M878 2 L886 2 L882 6 Z" fill="#999"/></svg>
<div class="t" style="left:248px;top:92px;font-size:7px;color:#fff;font-weight:bold">&#9660;#5485446 sell 1.04</div>
<div class="t" style="left:302.7px;top:92px;font-size:7.5px;color:#e8e8e8;transform:scaleX(0.827);transform-origin:0 0;">96.46 4596.84 4595.94 4596.06</div>
<div class="a" style="left:246px;top:99.8px;width:133px;height:40px;background:#000"></div>
<div class="a" style="left:247.5px;top:101.5px;width:130px;height:38px;background:#0c0c90"></div>
<div class="a" style="left:248px;top:102px;width:30px;height:13px;background:#4141ec"></div>
<div class="t" style="left:254.2px;top:104.8px;font-size:9px;color:#dde2ff;transform:scaleX(0.74);transform-origin:0 0;">SELL</div>
<div class="a" style="left:280.3px;top:102.2px;width:64.4px;height:12.4px;background:#dcdcdc"></div>
<div class="a" style="left:294px;top:102.2px;width:37.5px;height:12.4px;background:#fff"></div>
<div class="t" style="left:284.5px;top:106px;font-size:4.5px;color:#222;">&#9660;</div>
<div class="t" style="left:335px;top:106px;font-size:4.5px;color:#222;">&#9650;</div>
<div class="t" style="left:315.7px;top:104.6px;font-size:9px;color:#333;transform:scaleX(0.765);transform-origin:0 0;">1.04</div>
<div class="a" style="left:346.5px;top:102px;width:30.5px;height:13px;background:#4141ec"></div>
<div class="t" style="left:353.3px;top:104.8px;font-size:9px;color:#dde2ff;transform:scaleX(0.778);transform-origin:0 0;">BUY</div>
<div class="a" style="left:248px;top:116px;width:64px;height:23px;background:linear-gradient(#2424ee,#0f0fc8)"></div>
<div class="a" style="left:313.5px;top:116px;width:63.5px;height:23px;background:linear-gradient(#2424ee,#0f0fc8)"></div>
<div class="t" style="left:258.4px;top:127.8px;font-size:8.5px;color:#fff;transform:scaleX(0.979);transform-origin:0 0;font-weight:boldfont-weight:bold;">4596</div>
<div class="t" style="left:280.0px;top:116.5px;font-size:20px;color:#fff;transform:scaleX(0.998);transform-origin:0 0;">06</div>
<div class="t" style="left:323.2px;top:127.8px;font-size:8.5px;color:#fff;transform:scaleX(1.005);transform-origin:0 0;font-weight:boldfont-weight:bold;">4596</div>
<div class="t" style="left:345.4px;top:116.5px;font-size:20px;color:#fff;transform:scaleX(0.926);transform-origin:0 0;">35</div>
<div class="t" style="left:250px;top:139.5px;font-size:6.5px;color:#9a9a9a;">#5485457 sell 1.32</div>
<div class="a" style="left:0px;top:280px;width:1280px;height:392px;background:#f0f0f0"></div>
<div class="a" style="left:0px;top:291px;width:10px;height:381px;background:linear-gradient(90deg,#dde9f4,#c8dbee 55%,#d3e2f0)"></div>
<div class="a" style="left:9.5px;top:280px;width:1px;height:392px;background:#b0bccb"></div>
<svg style="left:3px;top:284px;" width="4" height="4" viewBox="0 0 4 4"><path d="M0 0L4 4M4 0L0 4" stroke="#111" stroke-width="1.3"/></svg>
<div class="t" style="left:0px;top:0px;font-size:8px;color:#2a3440;font-weight:bold;transform-origin:0 0;transform:translate(1.6px,669.5px) rotate(-90deg) scaleX(0.82)">Terminal</div>
<div class="a" style="left:10.5px;top:282px;width:1269.5px;height:374.5px;background:#fff"></div>
<div class="a" style="left:10.5px;top:282px;width:1269.5px;height:1px;background:#a8a8a8"></div>
<div class="a" style="left:10.5px;top:298.9px;width:1267.5px;height:13.36px;background:#0a78d6"></div>
<div class="a" style="left:10.5px;top:311.76px;width:1267.5px;height:0.8px;background:#dcdcdc"></div>
<div class="a" style="left:10.5px;top:312.26px;width:1267.5px;height:13.36px;background:#e9e9e9"></div>
<div class="a" style="left:10.5px;top:325.12px;width:1267.5px;height:0.8px;background:#dcdcdc"></div>
<div class="a" style="left:10.5px;top:338.48px;width:1267.5px;height:0.8px;background:#dcdcdc"></div>
<div class="a" style="left:10.5px;top:338.97999999999996px;width:1267.5px;height:13.36px;background:#e9e9e9"></div>
<div class="a" style="left:10.5px;top:351.84px;width:1267.5px;height:0.8px;background:#dcdcdc"></div>
<div class="a" style="left:10.5px;top:365.2px;width:1267.5px;height:0.8px;background:#dcdcdc"></div>
<div class="a" style="left:10.5px;top:365.7px;width:1267.5px;height:13.36px;background:#e9e9e9"></div>
<div class="a" style="left:10.5px;top:378.56px;width:1267.5px;height:0.8px;background:#dcdcdc"></div>
<div class="a" style="left:10.5px;top:391.91999999999996px;width:1267.5px;height:0.8px;background:#dcdcdc"></div>
<div class="a" style="left:10.5px;top:392.41999999999996px;width:1267.5px;height:13.36px;background:#e9e9e9"></div>
<div class="a" style="left:10.5px;top:405.28px;width:1267.5px;height:0.8px;background:#dcdcdc"></div>
<div class="a" style="left:10.5px;top:418.64px;width:1267.5px;height:0.8px;background:#dcdcdc"></div>
<div class="a" style="left:10.5px;top:419.14px;width:1267.5px;height:13.36px;background:#e9e9e9"></div>
<div class="a" style="left:10.5px;top:432.0px;width:1267.5px;height:0.8px;background:#dcdcdc"></div>
<div class="a" style="left:10.5px;top:445.36px;width:1267.5px;height:0.8px;background:#dcdcdc"></div>
<div class="a" style="left:10.5px;top:445.85999999999996px;width:1267.5px;height:13.36px;background:#e9e9e9"></div>
<div class="a" style="left:10.5px;top:458.71999999999997px;width:1267.5px;height:0.8px;background:#dcdcdc"></div>
<div class="a" style="left:10.5px;top:472.08px;width:1267.5px;height:0.8px;background:#dcdcdc"></div>
<div class="a" style="left:10.5px;top:472.58px;width:1267.5px;height:13.36px;background:#e9e9e9"></div>
<div class="a" style="left:10.5px;top:485.44px;width:1267.5px;height:0.8px;background:#dcdcdc"></div>
<div class="a" style="left:10.5px;top:498.79999999999995px;width:1267.5px;height:0.8px;background:#dcdcdc"></div>
<div class="a" style="left:10.5px;top:499.29999999999995px;width:1267.5px;height:13.36px;background:#e9e9e9"></div>
<div class="a" style="left:10.5px;top:512.16px;width:1267.5px;height:0.8px;background:#dcdcdc"></div>
<div class="a" style="left:10.5px;top:525.52px;width:1267.5px;height:0.8px;background:#dcdcdc"></div>
<div class="a" style="left:10.5px;top:526.02px;width:1267.5px;height:13.36px;background:#e9e9e9"></div>
<div class="a" style="left:10.5px;top:538.88px;width:1267.5px;height:0.8px;background:#dcdcdc"></div>
<div class="a" style="left:10.5px;top:552.24px;width:1267.5px;height:0.8px;background:#dcdcdc"></div>
<div class="a" style="left:135.2px;top:283px;width:0.8px;height:270.5px;background:#d6d6d6"></div>
<div class="a" style="left:308.6px;top:283px;width:0.8px;height:270.5px;background:#d6d6d6"></div>
<div class="a" style="left:395.6px;top:283px;width:0.8px;height:270.5px;background:#d6d6d6"></div>
<div class="a" style="left:462.5px;top:283px;width:0.8px;height:270.5px;background:#d6d6d6"></div>
<div class="a" style="left:549.1px;top:283px;width:0.8px;height:270.5px;background:#d6d6d6"></div>
<div class="a" style="left:646px;top:283px;width:0.8px;height:270.5px;background:#d6d6d6"></div>
<div class="a" style="left:743.2px;top:283px;width:0.8px;height:270.5px;background:#d6d6d6"></div>
<div class="a" style="left:839.7px;top:283px;width:0.8px;height:270.5px;background:#d6d6d6"></div>
<div class="a" style="left:936.9px;top:283px;width:0.8px;height:270.5px;background:#d6d6d6"></div>
<div class="a" style="left:1033.9px;top:283px;width:0.8px;height:270.5px;background:#d6d6d6"></div>
<div class="a" style="left:1131.1px;top:283px;width:0.8px;height:270.5px;background:#d6d6d6"></div>
<div class="t" style="left:15px;top:286.6px;font-size:9px;color:#222;transform:scaleX(0.9);transform-origin:0 0;">Order</div>
<div class="t" style="right:973.7px;top:286.6px;font-size:9px;color:#222;transform:scaleX(0.9);transform-origin:100% 0;">Time</div>
<div class="t" style="right:887px;top:286.6px;font-size:9px;color:#222;transform:scaleX(0.9);transform-origin:100% 0;">Type</div>
<div class="t" style="right:819.5px;top:286.6px;font-size:9px;color:#222;transform:scaleX(0.9);transform-origin:100% 0;">Size</div>
<div class="t" style="right:733.4px;top:286.6px;font-size:9px;color:#222;transform:scaleX(0.9);transform-origin:100% 0;">Symbol</div>
<div class="t" style="right:636.5px;top:286.6px;font-size:9px;color:#222;transform:scaleX(0.9);transform-origin:100% 0;">Price</div>
<div class="t" style="right:539.2px;top:286.6px;font-size:9px;color:#222;transform:scaleX(0.9);transform-origin:100% 0;">S / L</div>
<div class="t" style="right:442.70000000000005px;top:286.6px;font-size:9px;color:#222;transform:scaleX(0.9);transform-origin:100% 0;">T / P</div>
<div class="t" style="right:345.6px;top:286.6px;font-size:9px;color:#222;transform:scaleX(0.9);transform-origin:100% 0;">Price</div>
<div class="t" style="right:248.79999999999995px;top:286.6px;font-size:9px;color:#222;transform:scaleX(0.9);transform-origin:100% 0;">Commission</div>
<div class="t" style="right:151.70000000000005px;top:286.6px;font-size:9px;color:#222;transform:scaleX(0.9);transform-origin:100% 0;">Swap</div>
<div class="t" style="right:6px;top:286.6px;font-size:9px;color:#222;transform:scaleX(0.9);transform-origin:100% 0;">Profit</div>
<div class="t" style="left:42.5px;top:287px;font-size:9px;color:#999;transform:scaleX(0.8);transform-origin:0 0;">/</div>
<svg style="left:12.5px;top:300.4px;" width="10" height="10" viewBox="0 0 10 10"><path d="M0.5 0.5H5.5L8 3V9.5H0.5Z" fill="#e8f0fa" stroke="#fff" stroke-width="0.8"/><circle cx="6.6" cy="7.6" r="2.4" fill="#d2402a"/></svg>
<div class="t" style="left:25.5px;top:300.79999999999995px;font-size:9px;color:#eaf3ff;transform:scaleX(0.8);transform-origin:0 0;">5485446</div>
<div class="t" style="right:971.8px;top:300.79999999999995px;font-size:9px;color:#eaf3ff;transform:scaleX(0.8);transform-origin:100% 0;">2026.01.16 06:40:40</div>
<div class="t" style="right:885.5px;top:300.79999999999995px;font-size:9px;color:#eaf3ff;transform:scaleX(0.8);transform-origin:100% 0;">sell</div>
<div class="t" style="right:818.2px;top:300.79999999999995px;font-size:9px;color:#eaf3ff;transform:scaleX(0.8);transform-origin:100% 0;">1.32</div>
<div class="t" style="right:731.5px;top:300.79999999999995px;font-size:9px;color:#eaf3ff;transform:scaleX(0.8);transform-origin:100% 0;">xauusd</div>
<div class="t" style="right:634.5px;top:300.79999999999995px;font-size:9px;color:#eaf3ff;transform:scaleX(0.8);transform-origin:100% 0;">4600.40</div>
<div class="t" style="right:537.5px;top:300.79999999999995px;font-size:9px;color:#eaf3ff;transform:scaleX(0.8);transform-origin:100% 0;">0.00</div>
<div class="t" style="right:440.79999999999995px;top:300.79999999999995px;font-size:9px;color:#eaf3ff;transform:scaleX(0.8);transform-origin:100% 0;">0.00</div>
<div class="t" style="right:343.70000000000005px;top:300.79999999999995px;font-size:9px;color:#eaf3ff;transform:scaleX(0.8);transform-origin:100% 0;">4596.35</div>
<div class="t" style="right:246.79999999999995px;top:300.79999999999995px;font-size:9px;color:#eaf3ff;transform:scaleX(0.8);transform-origin:100% 0;">0.00</div>
<div class="t" style="right:149.70000000000005px;top:300.79999999999995px;font-size:9px;color:#eaf3ff;transform:scaleX(0.8);transform-origin:100% 0;">0.00</div>
<div class="t" style="right:17px;top:300.79999999999995px;font-size:9px;color:#eaf3ff;transform:scaleX(0.8);transform-origin:100% 0;">534.60</div>
<svg style="left:1268.5px;top:303.7px;" width="4" height="4" viewBox="0 0 4 4"><path d="M0 0L4 4M4 0L0 4" stroke="#9fc4ea" stroke-width="0.9"/></svg>
<svg style="left:12.5px;top:313.76px;" width="10" height="10" viewBox="0 0 10 10"><path d="M0.5 0.5H5.5L8 3V9.5H0.5Z" fill="#fff" stroke="#555" stroke-width="0.8"/><circle cx="6.6" cy="7.6" r="2.4" fill="#d2402a"/></svg>
<div class="t" style="left:25.5px;top:314.15999999999997px;font-size:9px;color:#2a2a2a;transform:scaleX(0.8);transform-origin:0 0;">5485457</div>
<div class="t" style="right:971.8px;top:314.15999999999997px;font-size:9px;color:#2a2a2a;transform:scaleX(0.8);transform-origin:100% 0;">2026.01.16 06:40:53</div>
<div class="t" style="right:885.5px;top:314.15999999999997px;font-size:9px;color:#2a2a2a;transform:scaleX(0.8);transform-origin:100% 0;">sell</div>
<div class="t" style="right:818.2px;top:314.15999999999997px;font-size:9px;color:#2a2a2a;transform:scaleX(0.8);transform-origin:100% 0;">1.32</div>
<div class="t" style="right:731.5px;top:314.15999999999997px;font-size:9px;color:#2a2a2a;transform:scaleX(0.8);transform-origin:100% 0;">xauusd</div>
<div class="t" style="right:634.5px;top:314.15999999999997px;font-size:9px;color:#2a2a2a;transform:scaleX(0.8);transform-origin:100% 0;">4600.07</div>
<div class="t" style="right:537.5px;top:314.15999999999997px;font-size:9px;color:#2a2a2a;transform:scaleX(0.8);transform-origin:100% 0;">0.00</div>
<div class="t" style="right:440.79999999999995px;top:314.15999999999997px;font-size:9px;color:#2a2a2a;transform:scaleX(0.8);transform-origin:100% 0;">0.00</div>
<div class="t" style="right:343.70000000000005px;top:314.15999999999997px;font-size:9px;color:#2a2a2a;transform:scaleX(0.8);transform-origin:100% 0;">4596.35</div>
<div class="t" style="right:246.79999999999995px;top:314.15999999999997px;font-size:9px;color:#2a2a2a;transform:scaleX(0.8);transform-origin:100% 0;">0.00</div>
<div class="t" style="right:149.70000000000005px;top:314.15999999999997px;font-size:9px;color:#2a2a2a;transform:scaleX(0.8);transform-origin:100% 0;">0.00</div>
<div class="t" style="right:17px;top:314.15999999999997px;font-size:9px;color:#2a2a2a;transform:scaleX(0.8);transform-origin:100% 0;">491.04</div>
<svg style="left:1268.5px;top:317.06px;" width="4" height="4" viewBox="0 0 4 4"><path d="M0 0L4 4M4 0L0 4" stroke="#8a8a8a" stroke-width="0.9"/></svg>
<svg style="left:12.5px;top:327.12px;" width="10" height="10" viewBox="0 0 10 10"><path d="M0.5 0.5H5.5L8 3V9.5H0.5Z" fill="#fff" stroke="#555" stroke-width="0.8"/><circle cx="6.6" cy="7.6" r="2.4" fill="#d2402a"/></svg>
<div class="t" style="left:25.5px;top:327.52px;font-size:9px;color:#2a2a2a;transform:scaleX(0.8);transform-origin:0 0;">5485600</div>
<div class="t" style="right:971.8px;top:327.52px;font-size:9px;color:#2a2a2a;transform:scaleX(0.8);transform-origin:100% 0;">2026.01.16 06:47:50</div>
<div class="t" style="right:885.5px;top:327.52px;font-size:9px;color:#2a2a2a;transform:scaleX(0.8);transform-origin:100% 0;">sell</div>
<div class="t" style="right:818.2px;top:327.52px;font-size:9px;color:#2a2a2a;transform:scaleX(0.8);transform-origin:100% 0;">1.40</div>
<div class="t" style="right:731.5px;top:327.52px;font-size:9px;color:#2a2a2a;transform:scaleX(0.8);transform-origin:100% 0;">xauusd</div>
<div class="t" style="right:634.5px;top:327.52px;font-size:9px;color:#2a2a2a;transform:scaleX(0.8);transform-origin:100% 0;">4600.90</div>
<div class="t" style="right:537.5px;top:327.52px;font-size:9px;color:#2a2a2a;transform:scaleX(0.8);transform-origin:100% 0;">0.00</div>
<div class="t" style="right:440.79999999999995px;top:327.52px;font-size:9px;color:#2a2a2a;transform:scaleX(0.8);transform-origin:100% 0;">0.00</div>
<div class="t" style="right:343.70000000000005px;top:327.52px;font-size:9px;color:#2a2a2a;transform:scaleX(0.8);transform-origin:100% 0;">4596.35</div>
<div class="t" style="right:246.79999999999995px;top:327.52px;font-size:9px;color:#2a2a2a;transform:scaleX(0.8);transform-origin:100% 0;">0.00</div>
<div class="t" style="right:149.70000000000005px;top:327.52px;font-size:9px;color:#2a2a2a;transform:scaleX(0.8);transform-origin:100% 0;">0.00</div>
<div class="t" style="right:17px;top:327.52px;font-size:9px;color:#2a2a2a;transform:scaleX(0.8);transform-origin:100% 0;">637.00</div>
<svg style="left:1268.5px;top:330.42px;" width="4" height="4" viewBox="0 0 4 4"><path d="M0 0L4 4M4 0L0 4" stroke="#8a8a8a" stroke-width="0.9"/></svg>
<svg style="left:12.5px;top:340.47999999999996px;" width="10" height="10" viewBox="0 0 10 10"><path d="M0.5 0.5H5.5L8 3V9.5H0.5Z" fill="#fff" stroke="#555" stroke-width="0.8"/><circle cx="6.6" cy="7.6" r="2.4" fill="#d2402a"/></svg>
<div class="t" style="left:25.5px;top:340.87999999999994px;font-size:9px;color:#2a2a2a;transform:scaleX(0.8);transform-origin:0 0;">5485602</div>
<div class="t" style="right:971.8px;top:340.87999999999994px;font-size:9px;color:#2a2a2a;transform:scaleX(0.8);transform-origin:100% 0;">2026.01.16 06:47:51</div>
<div class="t" style="right:885.5px;top:340.87999999999994px;font-size:9px;color:#2a2a2a;transform:scaleX(0.8);transform-origin:100% 0;">sell</div>
<div class="t" style="right:818.2px;top:340.87999999999994px;font-size:9px;color:#2a2a2a;transform:scaleX(0.8);transform-origin:100% 0;">1.40</div>
<div class="t" style="right:731.5px;top:340.87999999999994px;font-size:9px;color:#2a2a2a;transform:scaleX(0.8);transform-origin:100% 0;">xauusd</div>
<div class="t" style="right:634.5px;top:340.87999999999994px;font-size:9px;color:#2a2a2a;transform:scaleX(0.8);transform-origin:100% 0;">4600.91</div>
<div class="t" style="right:537.5px;top:340.87999999999994px;font-size:9px;color:#2a2a2a;transform:scaleX(0.8);transform-origin:100% 0;">0.00</div>
<div class="t" style="right:440.79999999999995px;top:340.87999999999994px;font-size:9px;color:#2a2a2a;transform:scaleX(0.8);transform-origin:100% 0;">0.00</div>
<div class="t" style="right:343.70000000000005px;top:340.87999999999994px;font-size:9px;color:#2a2a2a;transform:scaleX(0.8);transform-origin:100% 0;">4596.35</div>
<div class="t" style="right:246.79999999999995px;top:340.87999999999994px;font-size:9px;color:#2a2a2a;transform:scaleX(0.8);transform-origin:100% 0;">0.00</div>
<div class="t" style="right:149.70000000000005px;top:340.87999999999994px;font-size:9px;color:#2a2a2a;transform:scaleX(0.8);transform-origin:100% 0;">0.00</div>
<div class="t" style="right:17px;top:340.87999999999994px;font-size:9px;color:#2a2a2a;transform:scaleX(0.8);transform-origin:100% 0;">638.40</div>
<svg style="left:1268.5px;top:343.78px;" width="4" height="4" viewBox="0 0 4 4"><path d="M0 0L4 4M4 0L0 4" stroke="#8a8a8a" stroke-width="0.9"/></svg>
<svg style="left:12.5px;top:353.84px;" width="10" height="10" viewBox="0 0 10 10"><path d="M0.5 0.5H5.5L8 3V9.5H0.5Z" fill="#fff" stroke="#555" stroke-width="0.8"/><circle cx="6.6" cy="7.6" r="2.4" fill="#d2402a"/></svg>
<div class="t" style="left:25.5px;top:354.23999999999995px;font-size:9px;color:#2a2a2a;transform:scaleX(0.8);transform-origin:0 0;">5485809</div>
<div class="t" style="right:971.8px;top:354.23999999999995px;font-size:9px;color:#2a2a2a;transform:scaleX(0.8);transform-origin:100% 0;">2026.01.16 06:56:47</div>
<div class="t" style="right:885.5px;top:354.23999999999995px;font-size:9px;color:#2a2a2a;transform:scaleX(0.8);transform-origin:100% 0;">sell</div>
<div class="t" style="right:818.2px;top:354.23999999999995px;font-size:9px;color:#2a2a2a;transform:scaleX(0.8);transform-origin:100% 0;">1.04</div>
<div class="t" style="right:731.5px;top:354.23999999999995px;font-size:9px;color:#2a2a2a;transform:scaleX(0.8);transform-origin:100% 0;">xauusd</div>
<div class="t" style="right:634.5px;top:354.23999999999995px;font-size:9px;color:#2a2a2a;transform:scaleX(0.8);transform-origin:100% 0;">4601.08</div>
<div class="t" style="right:537.5px;top:354.23999999999995px;font-size:9px;color:#2a2a2a;transform:scaleX(0.8);transform-origin:100% 0;">0.00</div>
<div class="t" style="right:440.79999999999995px;top:354.23999999999995px;font-size:9px;color:#2a2a2a;transform:scaleX(0.8);transform-origin:100% 0;">0.00</div>
<div class="t" style="right:343.70000000000005px;top:354.23999999999995px;font-size:9px;color:#2a2a2a;transform:scaleX(0.8);transform-origin:100% 0;">4596.35</div>
<div class="t" style="right:246.79999999999995px;top:354.23999999999995px;font-size:9px;color:#2a2a2a;transform:scaleX(0.8);transform-origin:100% 0;">0.00</div>
<div class="t" style="right:149.70000000000005px;top:354.23999999999995px;font-size:9px;color:#2a2a2a;transform:scaleX(0.8);transform-origin:100% 0;">0.00</div>
<div class="t" style="right:17px;top:354.23999999999995px;font-size:9px;color:#2a2a2a;transform:scaleX(0.8);transform-origin:100% 0;">491.92</div>
<svg style="left:1268.5px;top:357.14px;" width="4" height="4" viewBox="0 0 4 4"><path d="M0 0L4 4M4 0L0 4" stroke="#8a8a8a" stroke-width="0.9"/></svg>
<svg style="left:12.5px;top:367.2px;" width="10" height="10" viewBox="0 0 10 10"><path d="M0.5 0.5H5.5L8 3V9.5H0.5Z" fill="#fff" stroke="#555" stroke-width="0.8"/><circle cx="6.6" cy="7.6" r="2.4" fill="#d2402a"/></svg>
<div class="t" style="left:25.5px;top:367.59999999999997px;font-size:9px;color:#2a2a2a;transform:scaleX(0.8);transform-origin:0 0;">5485822</div>
<div class="t" style="right:971.8px;top:367.59999999999997px;font-size:9px;color:#2a2a2a;transform:scaleX(0.8);transform-origin:100% 0;">2026.01.16 06:56:48</div>
<div class="t" style="right:885.5px;top:367.59999999999997px;font-size:9px;color:#2a2a2a;transform:scaleX(0.8);transform-origin:100% 0;">sell</div>
<div class="t" style="right:818.2px;top:367.59999999999997px;font-size:9px;color:#2a2a2a;transform:scaleX(0.8);transform-origin:100% 0;">1.04</div>
<div class="t" style="right:731.5px;top:367.59999999999997px;font-size:9px;color:#2a2a2a;transform:scaleX(0.8);transform-origin:100% 0;">xauusd</div>
<div class="t" style="right:634.5px;top:367.59999999999997px;font-size:9px;color:#2a2a2a;transform:scaleX(0.8);transform-origin:100% 0;">4601.13</div>
<div class="t" style="right:537.5px;top:367.59999999999997px;font-size:9px;color:#2a2a2a;transform:scaleX(0.8);transform-origin:100% 0;">0.00</div>
<div class="t" style="right:440.79999999999995px;top:367.59999999999997px;font-size:9px;color:#2a2a2a;transform:scaleX(0.8);transform-origin:100% 0;">0.00</div>
<div class="t" style="right:343.70000000000005px;top:367.59999999999997px;font-size:9px;color:#2a2a2a;transform:scaleX(0.8);transform-origin:100% 0;">4596.35</div>
<div class="t" style="right:246.79999999999995px;top:367.59999999999997px;font-size:9px;color:#2a2a2a;transform:scaleX(0.8);transform-origin:100% 0;">0.00</div>
<div class="t" style="right:149.70000000000005px;top:367.59999999999997px;font-size:9px;color:#2a2a2a;transform:scaleX(0.8);transform-origin:100% 0;">0.00</div>
<div class="t" style="right:17px;top:367.59999999999997px;font-size:9px;color:#2a2a2a;transform:scaleX(0.8);transform-origin:100% 0;">497.12</div>
<svg style="left:1268.5px;top:370.5px;" width="4" height="4" viewBox="0 0 4 4"><path d="M0 0L4 4M4 0L0 4" stroke="#8a8a8a" stroke-width="0.9"/></svg>
<svg style="left:12.5px;top:380.55999999999995px;" width="10" height="10" viewBox="0 0 10 10"><path d="M0.5 0.5H5.5L8 3V9.5H0.5Z" fill="#fff" stroke="#555" stroke-width="0.8"/><circle cx="6.6" cy="7.6" r="2.4" fill="#d2402a"/></svg>
<div class="t" style="left:25.5px;top:380.9599999999999px;font-size:9px;color:#2a2a2a;transform:scaleX(0.8);transform-origin:0 0;">5485842</div>
<div class="t" style="right:971.8px;top:380.9599999999999px;font-size:9px;color:#2a2a2a;transform:scaleX(0.8);transform-origin:100% 0;">2026.01.16 06:56:50</div>
<div class="t" style="right:885.5px;top:380.9599999999999px;font-size:9px;color:#2a2a2a;transform:scaleX(0.8);transform-origin:100% 0;">sell</div>
<div class="t" style="right:818.2px;top:380.9599999999999px;font-size:9px;color:#2a2a2a;transform:scaleX(0.8);transform-origin:100% 0;">1.04</div>
<div class="t" style="right:731.5px;top:380.9599999999999px;font-size:9px;color:#2a2a2a;transform:scaleX(0.8);transform-origin:100% 0;">xauusd</div>
<div class="t" style="right:634.5px;top:380.9599999999999px;font-size:9px;color:#2a2a2a;transform:scaleX(0.8);transform-origin:100% 0;">4600.98</div>
<div class="t" style="right:537.5px;top:380.9599999999999px;font-size:9px;color:#2a2a2a;transform:scaleX(0.8);transform-origin:100% 0;">0.00</div>
<div class="t" style="right:440.79999999999995px;top:380.9599999999999px;font-size:9px;color:#2a2a2a;transform:scaleX(0.8);transform-origin:100% 0;">0.00</div>
<div class="t" style="right:343.70000000000005px;top:380.9599999999999px;font-size:9px;color:#2a2a2a;transform:scaleX(0.8);transform-origin:100% 0;">4596.35</div>
<div class="t" style="right:246.79999999999995px;top:380.9599999999999px;font-size:9px;color:#2a2a2a;transform:scaleX(0.8);transform-origin:100% 0;">0.00</div>
<div class="t" style="right:149.70000000000005px;top:380.9599999999999px;font-size:9px;color:#2a2a2a;transform:scaleX(0.8);transform-origin:100% 0;">0.00</div>
<div class="t" style="right:17px;top:380.9599999999999px;font-size:9px;color:#2a2a2a;transform:scaleX(0.8);transform-origin:100% 0;">481.52</div>
<svg style="left:1268.5px;top:383.85999999999996px;" width="4" height="4" viewBox="0 0 4 4"><path d="M0 0L4 4M4 0L0 4" stroke="#8a8a8a" stroke-width="0.9"/></svg>
<svg style="left:12.5px;top:393.91999999999996px;" width="10" height="10" viewBox="0 0 10 10"><path d="M0.5 0.5H5.5L8 3V9.5H0.5Z" fill="#fff" stroke="#555" stroke-width="0.8"/><circle cx="6.6" cy="7.6" r="2.4" fill="#d2402a"/></svg>
<div class="t" style="left:25.5px;top:394.31999999999994px;font-size:9px;color:#2a2a2a;transform:scaleX(0.8);transform-origin:0 0;">5485849</div>
<div class="t" style="right:971.8px;top:394.31999999999994px;font-size:9px;color:#2a2a2a;transform:scaleX(0.8);transform-origin:100% 0;">2026.01.16 06:56:53</div>
<div class="t" style="right:885.5px;top:394.31999999999994px;font-size:9px;color:#2a2a2a;transform:scaleX(0.8);transform-origin:100% 0;">sell</div>
<div class="t" style="right:818.2px;top:394.31999999999994px;font-size:9px;color:#2a2a2a;transform:scaleX(0.8);transform-origin:100% 0;">1.04</div>
<div class="t" style="right:731.5px;top:394.31999999999994px;font-size:9px;color:#2a2a2a;transform:scaleX(0.8);transform-origin:100% 0;">xauusd</div>
<div class="t" style="right:634.5px;top:394.31999999999994px;font-size:9px;color:#2a2a2a;transform:scaleX(0.8);transform-origin:100% 0;">4600.91</div>
<div class="t" style="right:537.5px;top:394.31999999999994px;font-size:9px;color:#2a2a2a;transform:scaleX(0.8);transform-origin:100% 0;">0.00</div>
<div class="t" style="right:440.79999999999995px;top:394.31999999999994px;font-size:9px;color:#2a2a2a;transform:scaleX(0.8);transform-origin:100% 0;">0.00</div>
<div class="t" style="right:343.70000000000005px;top:394.31999999999994px;font-size:9px;color:#2a2a2a;transform:scaleX(0.8);transform-origin:100% 0;">4596.35</div>
<div class="t" style="right:246.79999999999995px;top:394.31999999999994px;font-size:9px;color:#2a2a2a;transform:scaleX(0.8);transform-origin:100% 0;">0.00</div>
<div class="t" style="right:149.70000000000005px;top:394.31999999999994px;font-size:9px;color:#2a2a2a;transform:scaleX(0.8);transform-origin:100% 0;">0.00</div>
<div class="t" style="right:17px;top:394.31999999999994px;font-size:9px;color:#2a2a2a;transform:scaleX(0.8);transform-origin:100% 0;">474.24</div>
<svg style="left:1268.5px;top:397.21999999999997px;" width="4" height="4" viewBox="0 0 4 4"><path d="M0 0L4 4M4 0L0 4" stroke="#8a8a8a" stroke-width="0.9"/></svg>
<svg style="left:12.5px;top:407.28px;" width="10" height="10" viewBox="0 0 10 10"><path d="M0.5 0.5H5.5L8 3V9.5H0.5Z" fill="#fff" stroke="#555" stroke-width="0.8"/><circle cx="6.6" cy="7.6" r="2.4" fill="#d2402a"/></svg>
<div class="t" style="left:25.5px;top:407.67999999999995px;font-size:9px;color:#2a2a2a;transform:scaleX(0.8);transform-origin:0 0;">5485851</div>
<div class="t" style="right:971.8px;top:407.67999999999995px;font-size:9px;color:#2a2a2a;transform:scaleX(0.8);transform-origin:100% 0;">2026.01.16 06:56:53</div>
<div class="t" style="right:885.5px;top:407.67999999999995px;font-size:9px;color:#2a2a2a;transform:scaleX(0.8);transform-origin:100% 0;">sell</div>
<div class="t" style="right:818.2px;top:407.67999999999995px;font-size:9px;color:#2a2a2a;transform:scaleX(0.8);transform-origin:100% 0;">1.04</div>
<div class="t" style="right:731.5px;top:407.67999999999995px;font-size:9px;color:#2a2a2a;transform:scaleX(0.8);transform-origin:100% 0;">xauusd</div>
<div class="t" style="right:634.5px;top:407.67999999999995px;font-size:9px;color:#2a2a2a;transform:scaleX(0.8);transform-origin:100% 0;">4600.89</div>
<div class="t" style="right:537.5px;top:407.67999999999995px;font-size:9px;color:#2a2a2a;transform:scaleX(0.8);transform-origin:100% 0;">0.00</div>
<div class="t" style="right:440.79999999999995px;top:407.67999999999995px;font-size:9px;color:#2a2a2a;transform:scaleX(0.8);transform-origin:100% 0;">0.00</div>
<div class="t" style="right:343.70000000000005px;top:407.67999999999995px;font-size:9px;color:#2a2a2a;transform:scaleX(0.8);transform-origin:100% 0;">4596.35</div>
<div class="t" style="right:246.79999999999995px;top:407.67999999999995px;font-size:9px;color:#2a2a2a;transform:scaleX(0.8);transform-origin:100% 0;">0.00</div>
<div class="t" style="right:149.70000000000005px;top:407.67999999999995px;font-size:9px;color:#2a2a2a;transform:scaleX(0.8);transform-origin:100% 0;">0.00</div>
<div class="t" style="right:17px;top:407.67999999999995px;font-size:9px;color:#2a2a2a;transform:scaleX(0.8);transform-origin:100% 0;">472.16</div>
<svg style="left:1268.5px;top:410.58px;" width="4" height="4" viewBox="0 0 4 4"><path d="M0 0L4 4M4 0L0 4" stroke="#8a8a8a" stroke-width="0.9"/></svg>
<svg style="left:12.5px;top:420.64px;" width="10" height="10" viewBox="0 0 10 10"><path d="M0.5 0.5H5.5L8 3V9.5H0.5Z" fill="#fff" stroke="#555" stroke-width="0.8"/><circle cx="6.6" cy="7.6" r="2.4" fill="#d2402a"/></svg>
<div class="t" style="left:25.5px;top:421.03999999999996px;font-size:9px;color:#2a2a2a;transform:scaleX(0.8);transform-origin:0 0;">5485852</div>
<div class="t" style="right:971.8px;top:421.03999999999996px;font-size:9px;color:#2a2a2a;transform:scaleX(0.8);transform-origin:100% 0;">2026.01.16 06:56:54</div>
<div class="t" style="right:885.5px;top:421.03999999999996px;font-size:9px;color:#2a2a2a;transform:scaleX(0.8);transform-origin:100% 0;">sell</div>
<div class="t" style="right:818.2px;top:421.03999999999996px;font-size:9px;color:#2a2a2a;transform:scaleX(0.8);transform-origin:100% 0;">1.04</div>
<div class="t" style="right:731.5px;top:421.03999999999996px;font-size:9px;color:#2a2a2a;transform:scaleX(0.8);transform-origin:100% 0;">xauusd</div>
<div class="t" style="right:634.5px;top:421.03999999999996px;font-size:9px;color:#2a2a2a;transform:scaleX(0.8);transform-origin:100% 0;">4600.98</div>
<div class="t" style="right:537.5px;top:421.03999999999996px;font-size:9px;color:#2a2a2a;transform:scaleX(0.8);transform-origin:100% 0;">0.00</div>
<div class="t" style="right:440.79999999999995px;top:421.03999999999996px;font-size:9px;color:#2a2a2a;transform:scaleX(0.8);transform-origin:100% 0;">0.00</div>
<div class="t" style="right:343.70000000000005px;top:421.03999999999996px;font-size:9px;color:#2a2a2a;transform:scaleX(0.8);transform-origin:100% 0;">4596.35</div>
<div class="t" style="right:246.79999999999995px;top:421.03999999999996px;font-size:9px;color:#2a2a2a;transform:scaleX(0.8);transform-origin:100% 0;">0.00</div>
<div class="t" style="right:149.70000000000005px;top:421.03999999999996px;font-size:9px;color:#2a2a2a;transform:scaleX(0.8);transform-origin:100% 0;">0.00</div>
<div class="t" style="right:17px;top:421.03999999999996px;font-size:9px;color:#2a2a2a;transform:scaleX(0.8);transform-origin:100% 0;">481.52</div>
<svg style="left:1268.5px;top:423.94px;" width="4" height="4" viewBox="0 0 4 4"><path d="M0 0L4 4M4 0L0 4" stroke="#8a8a8a" stroke-width="0.9"/></svg>
<svg style="left:12.5px;top:434.0px;" width="10" height="10" viewBox="0 0 10 10"><path d="M0.5 0.5H5.5L8 3V9.5H0.5Z" fill="#fff" stroke="#555" stroke-width="0.8"/><circle cx="6.6" cy="7.6" r="2.4" fill="#d2402a"/></svg>
<div class="t" style="left:25.5px;top:434.4px;font-size:9px;color:#2a2a2a;transform:scaleX(0.8);transform-origin:0 0;">5485853</div>
<div class="t" style="right:971.8px;top:434.4px;font-size:9px;color:#2a2a2a;transform:scaleX(0.8);transform-origin:100% 0;">2026.01.16 06:56:54</div>
<div class="t" style="right:885.5px;top:434.4px;font-size:9px;color:#2a2a2a;transform:scaleX(0.8);transform-origin:100% 0;">sell</div>
<div class="t" style="right:818.2px;top:434.4px;font-size:9px;color:#2a2a2a;transform:scaleX(0.8);transform-origin:100% 0;">1.04</div>
<div class="t" style="right:731.5px;top:434.4px;font-size:9px;color:#2a2a2a;transform:scaleX(0.8);transform-origin:100% 0;">xauusd</div>
<div class="t" style="right:634.5px;top:434.4px;font-size:9px;color:#2a2a2a;transform:scaleX(0.8);transform-origin:100% 0;">4600.97</div>
<div class="t" style="right:537.5px;top:434.4px;font-size:9px;color:#2a2a2a;transform:scaleX(0.8);transform-origin:100% 0;">0.00</div>
<div class="t" style="right:440.79999999999995px;top:434.4px;font-size:9px;color:#2a2a2a;transform:scaleX(0.8);transform-origin:100% 0;">0.00</div>
<div class="t" style="right:343.70000000000005px;top:434.4px;font-size:9px;color:#2a2a2a;transform:scaleX(0.8);transform-origin:100% 0;">4596.35</div>
<div class="t" style="right:246.79999999999995px;top:434.4px;font-size:9px;color:#2a2a2a;transform:scaleX(0.8);transform-origin:100% 0;">0.00</div>
<div class="t" style="right:149.70000000000005px;top:434.4px;font-size:9px;color:#2a2a2a;transform:scaleX(0.8);transform-origin:100% 0;">0.00</div>
<div class="t" style="right:17px;top:434.4px;font-size:9px;color:#2a2a2a;transform:scaleX(0.8);transform-origin:100% 0;">480.48</div>
<svg style="left:1268.5px;top:437.3px;" width="4" height="4" viewBox="0 0 4 4"><path d="M0 0L4 4M4 0L0 4" stroke="#8a8a8a" stroke-width="0.9"/></svg>
<svg style="left:12.5px;top:447.35999999999996px;" width="10" height="10" viewBox="0 0 10 10"><path d="M0.5 0.5H5.5L8 3V9.5H0.5Z" fill="#fff" stroke="#555" stroke-width="0.8"/><circle cx="6.6" cy="7.6" r="2.4" fill="#d2402a"/></svg>
<div class="t" style="left:25.5px;top:447.75999999999993px;font-size:9px;color:#2a2a2a;transform:scaleX(0.8);transform-origin:0 0;">5486079</div>
<div class="t" style="right:971.8px;top:447.75999999999993px;font-size:9px;color:#2a2a2a;transform:scaleX(0.8);transform-origin:100% 0;">2026.01.16 06:57:53</div>
<div class="t" style="right:885.5px;top:447.75999999999993px;font-size:9px;color:#2a2a2a;transform:scaleX(0.8);transform-origin:100% 0;">sell</div>
<div class="t" style="right:818.2px;top:447.75999999999993px;font-size:9px;color:#2a2a2a;transform:scaleX(0.8);transform-origin:100% 0;">1.04</div>
<div class="t" style="right:731.5px;top:447.75999999999993px;font-size:9px;color:#2a2a2a;transform:scaleX(0.8);transform-origin:100% 0;">xauusd</div>
<div class="t" style="right:634.5px;top:447.75999999999993px;font-size:9px;color:#2a2a2a;transform:scaleX(0.8);transform-origin:100% 0;">4601.92</div>
<div class="t" style="right:537.5px;top:447.75999999999993px;font-size:9px;color:#2a2a2a;transform:scaleX(0.8);transform-origin:100% 0;">0.00</div>
<div class="t" style="right:440.79999999999995px;top:447.75999999999993px;font-size:9px;color:#2a2a2a;transform:scaleX(0.8);transform-origin:100% 0;">0.00</div>
<div class="t" style="right:343.70000000000005px;top:447.75999999999993px;font-size:9px;color:#2a2a2a;transform:scaleX(0.8);transform-origin:100% 0;">4596.35</div>
<div class="t" style="right:246.79999999999995px;top:447.75999999999993px;font-size:9px;color:#2a2a2a;transform:scaleX(0.8);transform-origin:100% 0;">0.00</div>
<div class="t" style="right:149.70000000000005px;top:447.75999999999993px;font-size:9px;color:#2a2a2a;transform:scaleX(0.8);transform-origin:100% 0;">0.00</div>
<div class="t" style="right:17px;top:447.75999999999993px;font-size:9px;color:#2a2a2a;transform:scaleX(0.8);transform-origin:100% 0;">579.28</div>
<svg style="left:1268.5px;top:450.65999999999997px;" width="4" height="4" viewBox="0 0 4 4"><path d="M0 0L4 4M4 0L0 4" stroke="#8a8a8a" stroke-width="0.9"/></svg>
<svg style="left:12.5px;top:460.71999999999997px;" width="10" height="10" viewBox="0 0 10 10"><path d="M0.5 0.5H5.5L8 3V9.5H0.5Z" fill="#fff" stroke="#555" stroke-width="0.8"/><circle cx="6.6" cy="7.6" r="2.4" fill="#d2402a"/></svg>
<div class="t" style="left:25.5px;top:461.11999999999995px;font-size:9px;color:#2a2a2a;transform:scaleX(0.8);transform-origin:0 0;">5486084</div>
<div class="t" style="right:971.8px;top:461.11999999999995px;font-size:9px;color:#2a2a2a;transform:scaleX(0.8);transform-origin:100% 0;">2026.01.16 06:57:54</div>
<div class="t" style="right:885.5px;top:461.11999999999995px;font-size:9px;color:#2a2a2a;transform:scaleX(0.8);transform-origin:100% 0;">sell</div>
<div class="t" style="right:818.2px;top:461.11999999999995px;font-size:9px;color:#2a2a2a;transform:scaleX(0.8);transform-origin:100% 0;">1.04</div>
<div class="t" style="right:731.5px;top:461.11999999999995px;font-size:9px;color:#2a2a2a;transform:scaleX(0.8);transform-origin:100% 0;">xauusd</div>
<div class="t" style="right:634.5px;top:461.11999999999995px;font-size:9px;color:#2a2a2a;transform:scaleX(0.8);transform-origin:100% 0;">4601.92</div>
<div class="t" style="right:537.5px;top:461.11999999999995px;font-size:9px;color:#2a2a2a;transform:scaleX(0.8);transform-origin:100% 0;">0.00</div>
<div class="t" style="right:440.79999999999995px;top:461.11999999999995px;font-size:9px;color:#2a2a2a;transform:scaleX(0.8);transform-origin:100% 0;">0.00</div>
<div class="t" style="right:343.70000000000005px;top:461.11999999999995px;font-size:9px;color:#2a2a2a;transform:scaleX(0.8);transform-origin:100% 0;">4596.35</div>
<div class="t" style="right:246.79999999999995px;top:461.11999999999995px;font-size:9px;color:#2a2a2a;transform:scaleX(0.8);transform-origin:100% 0;">0.00</div>
<div class="t" style="right:149.70000000000005px;top:461.11999999999995px;font-size:9px;color:#2a2a2a;transform:scaleX(0.8);transform-origin:100% 0;">0.00</div>
<div class="t" style="right:17px;top:461.11999999999995px;font-size:9px;color:#2a2a2a;transform:scaleX(0.8);transform-origin:100% 0;">579.28</div>
<svg style="left:1268.5px;top:464.02px;" width="4" height="4" viewBox="0 0 4 4"><path d="M0 0L4 4M4 0L0 4" stroke="#8a8a8a" stroke-width="0.9"/></svg>
<svg style="left:12.5px;top:474.08px;" width="10" height="10" viewBox="0 0 10 10"><path d="M0.5 0.5H5.5L8 3V9.5H0.5Z" fill="#fff" stroke="#555" stroke-width="0.8"/><circle cx="6.6" cy="7.6" r="2.4" fill="#d2402a"/></svg>
<div class="t" style="left:25.5px;top:474.47999999999996px;font-size:9px;color:#2a2a2a;transform:scaleX(0.8);transform-origin:0 0;">5486088</div>
<div class="t" style="right:971.8px;top:474.47999999999996px;font-size:9px;color:#2a2a2a;transform:scaleX(0.8);transform-origin:100% 0;">2026.01.16 06:57:56</div>
<div class="t" style="right:885.5px;top:474.47999999999996px;font-size:9px;color:#2a2a2a;transform:scaleX(0.8);transform-origin:100% 0;">sell</div>
<div class="t" style="right:818.2px;top:474.47999999999996px;font-size:9px;color:#2a2a2a;transform:scaleX(0.8);transform-origin:100% 0;">1.04</div>
<div class="t" style="right:731.5px;top:474.47999999999996px;font-size:9px;color:#2a2a2a;transform:scaleX(0.8);transform-origin:100% 0;">xauusd</div>
<div class="t" style="right:634.5px;top:474.47999999999996px;font-size:9px;color:#2a2a2a;transform:scaleX(0.8);transform-origin:100% 0;">4601.87</div>
<div class="t" style="right:537.5px;top:474.47999999999996px;font-size:9px;color:#2a2a2a;transform:scaleX(0.8);transform-origin:100% 0;">0.00</div>
<div class="t" style="right:440.79999999999995px;top:474.47999999999996px;font-size:9px;color:#2a2a2a;transform:scaleX(0.8);transform-origin:100% 0;">0.00</div>
<div class="t" style="right:343.70000000000005px;top:474.47999999999996px;font-size:9px;color:#2a2a2a;transform:scaleX(0.8);transform-origin:100% 0;">4596.35</div>
<div class="t" style="right:246.79999999999995px;top:474.47999999999996px;font-size:9px;color:#2a2a2a;transform:scaleX(0.8);transform-origin:100% 0;">0.00</div>
<div class="t" style="right:149.70000000000005px;top:474.47999999999996px;font-size:9px;color:#2a2a2a;transform:scaleX(0.8);transform-origin:100% 0;">0.00</div>
<div class="t" style="right:17px;top:474.47999999999996px;font-size:9px;color:#2a2a2a;transform:scaleX(0.8);transform-origin:100% 0;">574.08</div>
<svg style="left:1268.5px;top:477.38px;" width="4" height="4" viewBox="0 0 4 4"><path d="M0 0L4 4M4 0L0 4" stroke="#8a8a8a" stroke-width="0.9"/></svg>
<svg style="left:12.5px;top:487.43999999999994px;" width="10" height="10" viewBox="0 0 10 10"><path d="M0.5 0.5H5.5L8 3V9.5H0.5Z" fill="#fff" stroke="#555" stroke-width="0.8"/><circle cx="6.6" cy="7.6" r="2.4" fill="#d2402a"/></svg>
<div class="t" style="left:25.5px;top:487.8399999999999px;font-size:9px;color:#2a2a2a;transform:scaleX(0.8);transform-origin:0 0;">5486089</div>
<div class="t" style="right:971.8px;top:487.8399999999999px;font-size:9px;color:#2a2a2a;transform:scaleX(0.8);transform-origin:100% 0;">2026.01.16 06:57:57</div>
<div class="t" style="right:885.5px;top:487.8399999999999px;font-size:9px;color:#2a2a2a;transform:scaleX(0.8);transform-origin:100% 0;">sell</div>
<div class="t" style="right:818.2px;top:487.8399999999999px;font-size:9px;color:#2a2a2a;transform:scaleX(0.8);transform-origin:100% 0;">1.04</div>
<div class="t" style="right:731.5px;top:487.8399999999999px;font-size:9px;color:#2a2a2a;transform:scaleX(0.8);transform-origin:100% 0;">xauusd</div>
<div class="t" style="right:634.5px;top:487.8399999999999px;font-size:9px;color:#2a2a2a;transform:scaleX(0.8);transform-origin:100% 0;">4601.88</div>
<div class="t" style="right:537.5px;top:487.8399999999999px;font-size:9px;color:#2a2a2a;transform:scaleX(0.8);transform-origin:100% 0;">0.00</div>
<div class="t" style="right:440.79999999999995px;top:487.8399999999999px;font-size:9px;color:#2a2a2a;transform:scaleX(0.8);transform-origin:100% 0;">0.00</div>
<div class="t" style="right:343.70000000000005px;top:487.8399999999999px;font-size:9px;color:#2a2a2a;transform:scaleX(0.8);transform-origin:100% 0;">4596.35</div>
<div class="t" style="right:246.79999999999995px;top:487.8399999999999px;font-size:9px;color:#2a2a2a;transform:scaleX(0.8);transform-origin:100% 0;">0.00</div>
<div class="t" style="right:149.70000000000005px;top:487.8399999999999px;font-size:9px;color:#2a2a2a;transform:scaleX(0.8);transform-origin:100% 0;">0.00</div>
<div class="t" style="right:17px;top:487.8399999999999px;font-size:9px;color:#2a2a2a;transform:scaleX(0.8);transform-origin:100% 0;">575.12</div>
<svg style="left:1268.5px;top:490.73999999999995px;" width="4" height="4" viewBox="0 0 4 4"><path d="M0 0L4 4M4 0L0 4" stroke="#8a8a8a" stroke-width="0.9"/></svg>
<svg style="left:12.5px;top:500.79999999999995px;" width="10" height="10" viewBox="0 0 10 10"><path d="M0.5 0.5H5.5L8 3V9.5H0.5Z" fill="#fff" stroke="#555" stroke-width="0.8"/><circle cx="6.6" cy="7.6" r="2.4" fill="#d2402a"/></svg>
<div class="t" style="left:25.5px;top:501.19999999999993px;font-size:9px;color:#2a2a2a;transform:scaleX(0.8);transform-origin:0 0;">5486268</div>
<div class="t" style="right:971.8px;top:501.19999999999993px;font-size:9px;color:#2a2a2a;transform:scaleX(0.8);transform-origin:100% 0;">2026.01.16 07:00:36</div>
<div class="t" style="right:885.5px;top:501.19999999999993px;font-size:9px;color:#2a2a2a;transform:scaleX(0.8);transform-origin:100% 0;">sell</div>
<div class="t" style="right:818.2px;top:501.19999999999993px;font-size:9px;color:#2a2a2a;transform:scaleX(0.8);transform-origin:100% 0;">1.04</div>
<div class="t" style="right:731.5px;top:501.19999999999993px;font-size:9px;color:#2a2a2a;transform:scaleX(0.8);transform-origin:100% 0;">xauusd</div>
<div class="t" style="right:634.5px;top:501.19999999999993px;font-size:9px;color:#2a2a2a;transform:scaleX(0.8);transform-origin:100% 0;">4600.92</div>
<div class="t" style="right:537.5px;top:501.19999999999993px;font-size:9px;color:#2a2a2a;transform:scaleX(0.8);transform-origin:100% 0;">0.00</div>
<div class="t" style="right:440.79999999999995px;top:501.19999999999993px;font-size:9px;color:#2a2a2a;transform:scaleX(0.8);transform-origin:100% 0;">0.00</div>
<div class="t" style="right:343.70000000000005px;top:501.19999999999993px;font-size:9px;color:#2a2a2a;transform:scaleX(0.8);transform-origin:100% 0;">4596.35</div>
<div class="t" style="right:246.79999999999995px;top:501.19999999999993px;font-size:9px;color:#2a2a2a;transform:scaleX(0.8);transform-origin:100% 0;">0.00</div>
<div class="t" style="right:149.70000000000005px;top:501.19999999999993px;font-size:9px;color:#2a2a2a;transform:scaleX(0.8);transform-origin:100% 0;">0.00</div>
<div class="t" style="right:17px;top:501.19999999999993px;font-size:9px;color:#2a2a2a;transform:scaleX(0.8);transform-origin:100% 0;">475.28</div>
<svg style="left:1268.5px;top:504.09999999999997px;" width="4" height="4" viewBox="0 0 4 4"><path d="M0 0L4 4M4 0L0 4" stroke="#8a8a8a" stroke-width="0.9"/></svg>
<svg style="left:12.5px;top:514.16px;" width="10" height="10" viewBox="0 0 10 10"><path d="M0.5 0.5H5.5L8 3V9.5H0.5Z" fill="#fff" stroke="#555" stroke-width="0.8"/><circle cx="6.6" cy="7.6" r="2.4" fill="#d2402a"/></svg>
<div class="t" style="left:25.5px;top:514.56px;font-size:9px;color:#2a2a2a;transform:scaleX(0.8);transform-origin:0 0;">5486347</div>
<div class="t" style="right:971.8px;top:514.56px;font-size:9px;color:#2a2a2a;transform:scaleX(0.8);transform-origin:100% 0;">2026.01.16 07:02:05</div>
<div class="t" style="right:885.5px;top:514.56px;font-size:9px;color:#2a2a2a;transform:scaleX(0.8);transform-origin:100% 0;">sell</div>
<div class="t" style="right:818.2px;top:514.56px;font-size:9px;color:#2a2a2a;transform:scaleX(0.8);transform-origin:100% 0;">1.04</div>
<div class="t" style="right:731.5px;top:514.56px;font-size:9px;color:#2a2a2a;transform:scaleX(0.8);transform-origin:100% 0;">xauusd</div>
<div class="t" style="right:634.5px;top:514.56px;font-size:9px;color:#2a2a2a;transform:scaleX(0.8);transform-origin:100% 0;">4600.61</div>
<div class="t" style="right:537.5px;top:514.56px;font-size:9px;color:#2a2a2a;transform:scaleX(0.8);transform-origin:100% 0;">0.00</div>
<div class="t" style="right:440.79999999999995px;top:514.56px;font-size:9px;color:#2a2a2a;transform:scaleX(0.8);transform-origin:100% 0;">0.00</div>
<div class="t" style="right:343.70000000000005px;top:514.56px;font-size:9px;color:#2a2a2a;transform:scaleX(0.8);transform-origin:100% 0;">4596.35</div>
<div class="t" style="right:246.79999999999995px;top:514.56px;font-size:9px;color:#2a2a2a;transform:scaleX(0.8);transform-origin:100% 0;">0.00</div>
<div class="t" style="right:149.70000000000005px;top:514.56px;font-size:9px;color:#2a2a2a;transform:scaleX(0.8);transform-origin:100% 0;">0.00</div>
<div class="t" style="right:17px;top:514.56px;font-size:9px;color:#2a2a2a;transform:scaleX(0.8);transform-origin:100% 0;">443.04</div>
<svg style="left:1268.5px;top:517.4599999999999px;" width="4" height="4" viewBox="0 0 4 4"><path d="M0 0L4 4M4 0L0 4" stroke="#8a8a8a" stroke-width="0.9"/></svg>
<svg style="left:12.5px;top:527.52px;" width="10" height="10" viewBox="0 0 10 10"><path d="M0.5 0.5H5.5L8 3V9.5H0.5Z" fill="#fff" stroke="#555" stroke-width="0.8"/><circle cx="6.6" cy="7.6" r="2.4" fill="#d2402a"/></svg>
<div class="t" style="left:25.5px;top:527.92px;font-size:9px;color:#2a2a2a;transform:scaleX(0.8);transform-origin:0 0;">5486353</div>
<div class="t" style="right:971.8px;top:527.92px;font-size:9px;color:#2a2a2a;transform:scaleX(0.8);transform-origin:100% 0;">2026.01.16 07:02:07</div>
<div class="t" style="right:885.5px;top:527.92px;font-size:9px;color:#2a2a2a;transform:scaleX(0.8);transform-origin:100% 0;">sell</div>
<div class="t" style="right:818.2px;top:527.92px;font-size:9px;color:#2a2a2a;transform:scaleX(0.8);transform-origin:100% 0;">1.04</div>
<div class="t" style="right:731.5px;top:527.92px;font-size:9px;color:#2a2a2a;transform:scaleX(0.8);transform-origin:100% 0;">xauusd</div>
<div class="t" style="right:634.5px;top:527.92px;font-size:9px;color:#2a2a2a;transform:scaleX(0.8);transform-origin:100% 0;">4600.55</div>
<div class="t" style="right:537.5px;top:527.92px;font-size:9px;color:#2a2a2a;transform:scaleX(0.8);transform-origin:100% 0;">0.00</div>
<div class="t" style="right:440.79999999999995px;top:527.92px;font-size:9px;color:#2a2a2a;transform:scaleX(0.8);transform-origin:100% 0;">0.00</div>
<div class="t" style="right:343.70000000000005px;top:527.92px;font-size:9px;color:#2a2a2a;transform:scaleX(0.8);transform-origin:100% 0;">4596.35</div>
<div class="t" style="right:246.79999999999995px;top:527.92px;font-size:9px;color:#2a2a2a;transform:scaleX(0.8);transform-origin:100% 0;">0.00</div>
<div class="t" style="right:149.70000000000005px;top:527.92px;font-size:9px;color:#2a2a2a;transform:scaleX(0.8);transform-origin:100% 0;">0.00</div>
<div class="t" style="right:17px;top:527.92px;font-size:9px;color:#2a2a2a;transform:scaleX(0.8);transform-origin:100% 0;">436.80</div>
<svg style="left:1268.5px;top:530.8199999999999px;" width="4" height="4" viewBox="0 0 4 4"><path d="M0 0L4 4M4 0L0 4" stroke="#8a8a8a" stroke-width="0.9"/></svg>
<svg style="left:12.5px;top:540.88px;" width="10" height="10" viewBox="0 0 10 10"><path d="M0.5 0.5H5.5L8 3V9.5H0.5Z" fill="#fff" stroke="#555" stroke-width="0.8"/><circle cx="6.6" cy="7.6" r="2.4" fill="#d2402a"/></svg>
<div class="t" style="left:25.5px;top:541.28px;font-size:9px;color:#2a2a2a;transform:scaleX(0.8);transform-origin:0 0;">5486355</div>
<div class="t" style="right:971.8px;top:541.28px;font-size:9px;color:#2a2a2a;transform:scaleX(0.8);transform-origin:100% 0;">2026.01.16 07:02:09</div>
<div class="t" style="right:885.5px;top:541.28px;font-size:9px;color:#2a2a2a;transform:scaleX(0.8);transform-origin:100% 0;">sell</div>
<div class="t" style="right:818.2px;top:541.28px;font-size:9px;color:#2a2a2a;transform:scaleX(0.8);transform-origin:100% 0;">1.04</div>
<div class="t" style="right:731.5px;top:541.28px;font-size:9px;color:#2a2a2a;transform:scaleX(0.8);transform-origin:100% 0;">xauusd</div>
<div class="t" style="right:634.5px;top:541.28px;font-size:9px;color:#2a2a2a;transform:scaleX(0.8);transform-origin:100% 0;">4600.45</div>
<div class="t" style="right:537.5px;top:541.28px;font-size:9px;color:#2a2a2a;transform:scaleX(0.8);transform-origin:100% 0;">0.00</div>
<div class="t" style="right:440.79999999999995px;top:541.28px;font-size:9px;color:#2a2a2a;transform:scaleX(0.8);transform-origin:100% 0;">0.00</div>
<div class="t" style="right:343.70000000000005px;top:541.28px;font-size:9px;color:#2a2a2a;transform:scaleX(0.8);transform-origin:100% 0;">4596.35</div>
<div class="t" style="right:246.79999999999995px;top:541.28px;font-size:9px;color:#2a2a2a;transform:scaleX(0.8);transform-origin:100% 0;">0.00</div>
<div class="t" style="right:149.70000000000005px;top:541.28px;font-size:9px;color:#2a2a2a;transform:scaleX(0.8);transform-origin:100% 0;">0.00</div>
<div class="t" style="right:17px;top:541.28px;font-size:9px;color:#2a2a2a;transform:scaleX(0.8);transform-origin:100% 0;">426.40</div>
<svg style="left:1268.5px;top:544.18px;" width="4" height="4" viewBox="0 0 4 4"><path d="M0 0L4 4M4 0L0 4" stroke="#8a8a8a" stroke-width="0.9"/></svg>
<div class="a" style="left:10.5px;top:552.74px;width:1267.5px;height:13.5px;background:#cfcfcf"></div>
<svg style="left:12.5px;top:554.74px;" width="10" height="10" viewBox="0 0 10 10"><rect x="0.5" y="0.5" width="8.5" height="9" fill="#fff" stroke="#666" stroke-width="0.8"/><path d="M4.7 2L7.5 5H5.8V8H3.6V5H1.9Z" fill="#1e9a32"/></svg>
<div class="t" style="left:25.5px;top:554.84px;font-size:9px;color:#1a1a1a;transform:scaleX(0.87);transform-origin:0 0;font-weight:bold">Balance: 68 601.52 USD&nbsp; Equity: 78 370.80&nbsp; Margin: 9 680.49&nbsp; Free margin: 68 690.31&nbsp; Margin level: 809.57%</div>
<div class="t" style="right:17.5px;top:554.84px;font-size:9px;color:#1a1a1a;transform:scaleX(0.87);transform-origin:100% 0;font-weight:bold">9 769.28</div>
<div class="a" style="left:10.5px;top:656.3px;width:1269.5px;height:16px;background:#f0f0f0"></div>
<div class="a" style="left:10.5px;top:671.3px;width:1269.5px;height:0.8px;background:#fafafa"></div>
<div class="a" style="left:10.5px;top:656.3px;width:1269.5px;height:1px;background:#3a3a3a"></div>
<div class="a" style="left:12px;top:656.3px;width:33.5px;height:13.5px;background:#fff;border:1px solid #3a3a3a;border-top:none"></div>
<div class="t" style="left:18.7px;top:658.3px;font-size:9px;color:#111;transform:scaleX(0.798);transform-origin:0 0;">Trade</div>
<div class="t" style="left:51.2px;top:658.3px;font-size:9px;color:#8a8a8a;transform:scaleX(0.829);transform-origin:0 0;">Exposure</div>
<div class="a" style="left:90px;top:659px;width:0.9px;height:9px;background:#8a8a8a"></div>
<div class="t" style="left:96.7px;top:658.3px;font-size:9px;color:#8a8a8a;transform:scaleX(0.904);transform-origin:0 0;">Account History</div>
<div class="a" style="left:161px;top:659px;width:0.9px;height:9px;background:#8a8a8a"></div>
<div class="t" style="left:167.7px;top:658.3px;font-size:9px;color:#8a8a8a;transform:scaleX(0.844);transform-origin:0 0;">News</div>
<div class="a" style="left:193.5px;top:659px;width:0.9px;height:9px;background:#8a8a8a"></div>
<div class="t" style="left:199.7px;top:658.3px;font-size:9px;color:#8a8a8a;transform:scaleX(0.869);transform-origin:0 0;">Alerts</div>
<div class="a" style="left:227px;top:659px;width:0.9px;height:9px;background:#8a8a8a"></div>
<div class="t" style="left:232.7px;top:658.3px;font-size:9px;color:#8a8a8a;transform:scaleX(0.935);transform-origin:0 0;">Mailbox</div>
<div class="a" style="left:273px;top:659px;width:0.9px;height:9px;background:#8a8a8a"></div>
<div class="t" style="left:279.7px;top:658.3px;font-size:9px;color:#8a8a8a;transform:scaleX(0.873);transform-origin:0 0;">Market</div>
<div class="a" style="left:322.4px;top:659px;width:0.9px;height:9px;background:#8a8a8a"></div>
<div class="t" style="left:328.7px;top:658.3px;font-size:9px;color:#8a8a8a;transform:scaleX(0.83);transform-origin:0 0;">Signals</div>
<div class="a" style="left:361px;top:659px;width:0.9px;height:9px;background:#8a8a8a"></div>
<div class="t" style="left:367.2px;top:658.3px;font-size:9px;color:#8a8a8a;transform:scaleX(0.898);transform-origin:0 0;">Articles</div>
<div class="a" style="left:400px;top:659px;width:0.9px;height:9px;background:#8a8a8a"></div>
<div class="t" style="left:406.7px;top:658.3px;font-size:9px;color:#8a8a8a;transform:scaleX(0.809);transform-origin:0 0;">Code Base</div>
<div class="a" style="left:450.5px;top:659px;width:0.9px;height:9px;background:#8a8a8a"></div>
<div class="t" style="left:455.7px;top:658.3px;font-size:9px;color:#8a8a8a;transform:scaleX(0.852);transform-origin:0 0;">Experts</div>
<div class="a" style="left:489px;top:659px;width:0.9px;height:9px;background:#8a8a8a"></div>
<div class="t" style="left:494.7px;top:658.3px;font-size:9px;color:#8a8a8a;transform:scaleX(0.864);transform-origin:0 0;">Journal</div>
<div class="a" style="left:528.4px;top:659px;width:0.9px;height:9px;background:#8a8a8a"></div>
<div class="t" style="left:263px;top:663.5px;font-size:5.5px;color:#d02020;">7</div>
<div class="t" style="left:306px;top:664px;font-size:5.5px;color:#d02020;">121</div>
<div class="a" style="left:0px;top:672px;width:1280px;height:16.5px;background:#f0f0f0"></div>
<div class="t" style="left:1.7px;top:677.8px;font-size:9px;color:#1a1a1a;transform:scaleX(0.805);transform-origin:0 0;">For Help, press F1</div>
<div class="a" style="left:817px;top:674px;width:0.9px;height:13px;background:#c8c8c8"></div>
<div class="a" style="left:895px;top:674px;width:0.9px;height:13px;background:#c8c8c8"></div>
<div class="a" style="left:963.6px;top:674px;width:0.9px;height:13px;background:#c8c8c8"></div>
<div class="a" style="left:1180px;top:674px;width:0.9px;height:13px;background:#c8c8c8"></div>
<div class="t" style="left:821.7px;top:677.8px;font-size:9px;color:#1a1a1a;transform:scaleX(0.877);transform-origin:0 0;">Default</div>
<svg style="left:1196px;top:677px;" width="10" height="9" viewBox="0 0 10 9"><path d="M1 9V3M3 9V1M5 9V4M7 9V2M9 9V5" stroke="#2a8a2a" stroke-width="1.3"/></svg>
<div class="t" style="left:1207.7px;top:677.8px;font-size:9px;color:#333;transform:scaleX(1.265);transform-origin:0 0;">1063/5 kb</div>
<svg style="left:1268px;top:678px;" width="10" height="10" viewBox="0 0 10 10"><path d="M9 1L1 9M9 4L4 9M9 7L7 9" stroke="#b0b0b0" stroke-width="0.9"/></svg>
<div class="a" style="left:0px;top:688.5px;width:1280px;height:31.5px;background:linear-gradient(90deg,#e0e9f3 0%,#dee7f3 35%,#d8e0f3 55%,#d6def2 75%,#d9e0f0 79%,#dfe8f2 84%,#e0e8f2 100%)"></div>
<div class="a" style="left:0px;top:688.5px;width:1280px;height:0.8px;background:#d0d8e2"></div>
<svg style="left:12px;top:694px;" width="22" height="16" viewBox="0 0 22 16"><path d="M3 13C1.5 13 0.8 12 0.8 11C0.8 9.8 1.8 9 3 9C3.3 6.5 5.5 5 8 5C10.5 5 12.5 6.8 13 9C14.5 9 15.5 10 15.5 11.2C15.5 12.3 14.5 13 13.5 13Z" fill="#c0d4ea" stroke="#9ab4d4" stroke-width="0.7"/><circle cx="14" cy="5.5" r="5" fill="#c81e1e"/><text x="14" y="7.8" font-size="6.5" fill="#fff" text-anchor="middle" font-family="Liberation Sans" font-weight="bold">6</text></svg>
<div class="t" style="left:33.7px;top:695.3px;font-size:8px;color:#222;transform:scaleX(0.895);transform-origin:0 0;">24°C</div>
<svg style="left:34px;top:706px;" width="16" height="8" viewBox="0 0 16 8"><g stroke="#555" stroke-width="0.8" fill="none"><path d="M3 0.5L1 2.5M2.5 1H5.5L2 4.5M3.5 2.5L4.5 3.5M4 3.8L1 7.5M3.5 4.3H6.8L2.5 7.8M4.8 6L5.8 7"/><path d="M9 0.8H15M12 0.8V4.5M9.3 2V4.5H14.7V2M10.2 3H11.2M12.8 3H13.8M9.5 5.5H14.5M9 6.6H15M11.5 6.6L10 8H14.2M13.5 7.2L14.5 8"/></g></svg>
<svg style="left:381px;top:696px;" width="16" height="16" viewBox="0 0 16 16"><rect x="0" y="0" width="7.6" height="7.6" fill="#1a8ae0"/><rect x="8.4" y="0" width="7.6" height="7.6" fill="#2a9af0"/><rect x="0" y="8.4" width="7.6" height="7.6" fill="#1580d8"/><rect x="8.4" y="8.4" width="7.6" height="7.6" fill="#1f90e8"/></svg>
<div class="a" style="left:407px;top:695px;width:144px;height:19px;background:#f7f9fc;border:1px solid #d8e0ea;border-radius:10px"></div>
<svg style="left:415px;top:700px;" width="10" height="10" viewBox="0 0 10 10"><circle cx="4" cy="4" r="3.2" fill="none" stroke="#333" stroke-width="1.2"/><path d="M6.3 6.3L9 9" stroke="#333" stroke-width="1.3"/></svg>
<div class="t" style="left:430.7px;top:699.5px;font-size:9.5px;color:#555;transform:scaleX(0.88);transform-origin:0 0;">Search</div>
<svg style="left:561px;top:697px;" width="15" height="15" viewBox="0 0 15 15"><rect x="0" y="3.8" width="11.8" height="10.8" fill="#1a1a1a"/><rect x="4" y="0" width="10" height="10.5" fill="#f4f4f4" opacity="0.92"/><rect x="4" y="3.8" width="7.8" height="6.7" fill="#c8c8c8"/></svg>
<svg style="left:591px;top:696px;" width="15" height="17" viewBox="0 0 15 17"><path d="M4 0.5H13.5C14.5 0.5 14.8 1.5 14.5 2.5L11 14C10.5 15.5 9 16 7.5 16.3L0.8 16.5L3 2C3.2 1 3.5 0.5 4 0.5Z" fill="#17888e"/><path d="M10.5 3.5C8 3 6.5 4.5 7.5 6.5C8.5 8.5 9.5 9 8.5 11.5C7.8 13 6 13 4.8 12.5" stroke="#e8fffa" stroke-width="1.3" fill="none"/></svg>
<div class="a" style="left:596.0px;top:714.5px;width:5px;height:1.3px;background:#7a8490;border-radius:1px"></div>
<svg style="left:620px;top:696px;" width="16" height="16" viewBox="0 0 16 16"><circle cx="8" cy="8" r="7.6" fill="#2aa0dc"/><path d="M3.5 7.8L12 4.5L10.5 12L8 10L6.5 11.5L6.5 9.2L10.5 6L5.8 8.8Z" fill="#fff"/></svg>
<div class="a" style="left:625.0px;top:714.5px;width:5px;height:1.3px;background:#7a8490;border-radius:1px"></div>
<svg style="left:649px;top:696px;" width="17" height="16" viewBox="0 0 17 16"><path d="M0.5 2.5H6L7.5 4H16.5V14.5H0.5Z" fill="#f0b820"/><rect x="0.5" y="5.5" width="16" height="9" fill="#ffd44a"/><rect x="4" y="10" width="9" height="3" fill="#2a78d8"/></svg>
<svg style="left:678px;top:696px;" width="16" height="17" viewBox="0 0 16 17"><path d="M1 4H15V15.5H1Z" fill="#1f6ab8"/><path d="M5 4V2C5 1 6 0.5 8 0.5S11 1 11 2V4" stroke="#3a8ad8" stroke-width="1.2" fill="none"/><rect x="4" y="7" width="3.5" height="3.5" fill="#f25022"/><rect x="8.5" y="7" width="3.5" height="3.5" fill="#7fba00"/><rect x="4" y="11" width="3.5" height="3.5" fill="#00a4ef"/><rect x="8.5" y="11" width="3.5" height="3.5" fill="#ffb900"/></svg>
<svg style="left:707.5px;top:696px;" width="16" height="16" viewBox="0 0 16 16"><rect x="0.5" y="0.5" width="15" height="15" rx="3" fill="#111a2a"/><path d="M4 12C6 8 7 5 8 3C9 5 10 8 12 12M5 9.5H11" stroke="#fff" stroke-width="1.2" fill="none"/></svg>
<div class="a" style="left:713.0px;top:714.5px;width:5px;height:1.3px;background:#7a8490;border-radius:1px"></div>
<svg style="left:736.5px;top:696px;" width="16" height="16" viewBox="0 0 16 16"><rect x="0.5" y="0.5" width="15" height="15" rx="3" fill="#0a2240"/><text x="8" y="11.5" font-size="8" fill="#31a8ff" text-anchor="middle" font-family="Liberation Sans" font-weight="bold">Ps</text></svg>
<svg style="left:766px;top:696px;" width="16" height="16" viewBox="0 0 16 16"><rect x="0.5" y="0.5" width="15" height="15" rx="3" fill="#330a02"/><text x="8" y="11.5" font-size="8" fill="#ff9a00" text-anchor="middle" font-family="Liberation Sans" font-weight="bold">Ai</text></svg>
<div class="a" style="left:771.5px;top:714.5px;width:5px;height:1.3px;background:#7a8490;border-radius:1px"></div>
<svg style="left:795px;top:695.5px;" width="17" height="17" viewBox="0 0 17 17"><circle cx="8.5" cy="8.5" r="8" fill="#db4437"/><path d="M8.5 8.5L1.6 4.5A8 8 0 0 0 5.5 15.9Z" fill="#0f9d58"/><path d="M8.5 8.5L5.5 15.9A8 8 0 0 0 16.5 8.5Z" fill="#f4b400"/><circle cx="8.5" cy="8.5" r="3.8" fill="#fff"/><circle cx="8.5" cy="8.5" r="3" fill="#4285f4"/></svg>
<div class="a" style="left:801.0px;top:714.5px;width:5px;height:1.3px;background:#7a8490;border-radius:1px"></div>
<svg style="left:824.5px;top:695.5px;" width="17" height="17" viewBox="0 0 17 17"><circle cx="8.5" cy="8.5" r="8" fill="#1a8ad8"/><path d="M2 10C3 5 8 3.5 12 5.5C14.5 7 14 10 11 10H6C6 12.5 9 14 13 12.5C11 15.5 7 16.5 4 14.5C2.5 13.5 1.8 11.8 2 10Z" fill="#4ad0a0"/><path d="M5.5 9C6 7 8 6 10 7" stroke="#fff" stroke-width="1.3" fill="none"/></svg>
<div class="a" style="left:830.5px;top:714.5px;width:5px;height:1.3px;background:#7a8490;border-radius:1px"></div>
<svg style="left:853.5px;top:696px;" width="17" height="16" viewBox="0 0 17 16"><rect x="4" y="0.5" width="12.5" height="15" rx="1.5" fill="#2b7cd3"/><rect x="0.5" y="3.5" width="9" height="9" rx="1" fill="#185abd"/><text x="5" y="10.8" font-size="7" fill="#fff" text-anchor="middle" font-family="Liberation Sans" font-weight="bold">W</text></svg>
<div class="a" style="left:859.5px;top:714.5px;width:5px;height:1.3px;background:#7a8490;border-radius:1px"></div>
<div class="a" style="left:880px;top:689.5px;width:24px;height:30px;background:rgba(255,255,255,0.45);border-radius:3px"></div>
<svg style="left:884px;top:695.5px;" width="16" height="16" viewBox="0 0 16 16"><rect x="0.5" y="0.5" width="15" height="15" rx="3.5" fill="#111"/><text x="8" y="10" font-size="4" fill="#bbb" text-anchor="middle" font-family="Liberation Sans" font-weight="bold">MT4</text></svg>
<div class="a" style="left:886px;top:715.5px;width:12px;height:2px;background:#2a7ad0;border-radius:1px"></div>
<svg style="left:1128px;top:702px;" width="8" height="5" viewBox="0 0 8 5"><path d="M0.5 4.5L4 1L7.5 4.5" stroke="#333" stroke-width="1.1" fill="none"/></svg>
<div class="t" style="left:1149.7px;top:701.5px;font-size:7.5px;color:#222;transform:scaleX(0.923);transform-origin:0 0;">ENG</div>
<svg style="left:1177px;top:699px;" width="12" height="11" viewBox="0 0 12 11"><rect x="0.5" y="1.5" width="8" height="6" fill="none" stroke="#333" stroke-width="0.9"/><path d="M3 9.5H7M5 7.5V9.5" stroke="#333" stroke-width="0.9"/><path d="M9 0.5V5" stroke="#333" stroke-width="1.2"/></svg>
<svg style="left:1192px;top:700px;" width="9" height="9" viewBox="0 0 9 9"><path d="M0.5 3H2.5L5 0.8V8.2L2.5 6H0.5Z" fill="none" stroke="#333" stroke-width="0.9"/><path d="M6.5 3C7.3 3.8 7.3 5.2 6.5 6" stroke="#333" stroke-width="0.8" fill="none"/></svg>
<div class="t" style="left:1222.7px;top:695px;font-size:8px;color:#222;transform:scaleX(0.973);transform-origin:0 0;">1:15 PM</div>
<div class="t" style="left:1214.7px;top:705.5px;font-size:8px;color:#222;transform:scaleX(1.039);transform-origin:0 0;">1/16/2026</div>
<svg style="left:1257px;top:699px;" width="10" height="11" viewBox="0 0 10 11"><path d="M5 0.8C2.8 0.8 1.8 2.5 1.8 4.5V7.5L0.6 9H9.4L8.2 7.5V4.5C8.2 2.5 7.2 0.8 5 0.8Z" fill="none" stroke="#333" stroke-width="0.9"/><path d="M3.8 10H6.2" stroke="#333" stroke-width="0.9"/></svg>
<div class="t" style="left:1025px;top:664.5px;font-size:30px;color:#fdfdfd;letter-spacing:-0.3px;text-shadow:0 0 1px #555,1px 1px 1.5px #777;transform:scaleX(0.9);transform-origin:0 0">@Dave Super Mega</div>
<svg style="left:994px;top:667px;" width="26" height="28" viewBox="0 0 26 28"><path d="M13 1.5C6.5 1.5 1.5 6.5 1.5 13C1.5 16.5 3 19.5 5.5 21.5L4 26.5L9.5 24C10.6 24.4 11.8 24.5 13 24.5C19.5 24.5 24.5 19.5 24.5 13S19.5 1.5 13 1.5Z" fill="#fcfcfc" stroke="#555" stroke-width="1"/><path d="M16 7C12.5 6.5 11 8.5 11 11V19.5M8 12.5H14.5" stroke="#444" stroke-width="2.6" fill="none"/><path d="M16 7C12.5 6.5 11 8.5 11 11V19.5M8 12.5H14.5" stroke="#fff" stroke-width="1" fill="none"/></svg>
</body></html>
